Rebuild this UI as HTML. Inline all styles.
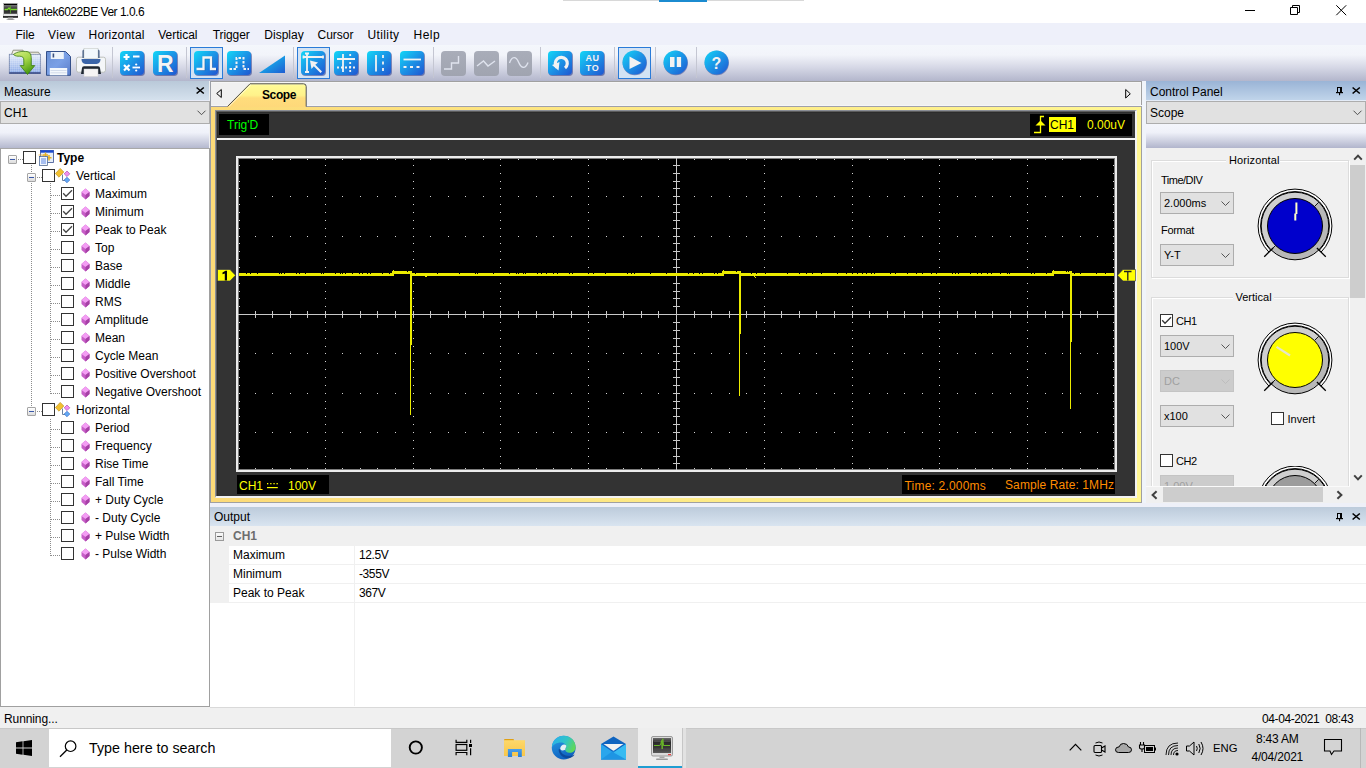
<!DOCTYPE html>
<html><head><meta charset="utf-8">
<style>
*{margin:0;padding:0;box-sizing:border-box}
html,body{width:1366px;height:768px;overflow:hidden;background:#f0f0f0;font-family:"Liberation Sans",sans-serif;font-size:12px;color:#000}
.a{position:absolute}
.t{position:absolute;white-space:pre;line-height:1;font-family:"Liberation Sans",sans-serif}
svg{position:absolute;overflow:visible}
</style></head><body>
<div class="a" style="left:0px;top:0px;width:1366px;height:23px;background:#fff;"></div><div class="a" style="left:563px;top:0px;width:241px;height:1px;background:#d8d8d8;"></div><div class="a" style="left:659px;top:0px;width:48px;height:2px;background:#1b8bd0;"></div><svg style="left:3px;top:3px" width="15" height="17" viewBox="0 0 15 17">
<defs><linearGradient id="gapp" x1="0" y1="0" x2="0" y2="1"><stop offset="0" stop-color="#7a7a7a"/><stop offset="0.5" stop-color="#2a2a2a"/><stop offset="1" stop-color="#3a3a3a"/></linearGradient></defs>
<rect x="0.3" y="0.3" width="14.4" height="14" fill="#e4e4e4" stroke="#9a9a9a" stroke-width="0.5"/>
<rect x="1" y="0.8" width="13" height="1.2" fill="#000"/>
<rect x="1" y="2" width="13" height="8.8" fill="url(#gapp)"/>
<path d="M1.5 6.5 H4.5 L6 5 L7.2 6.5 H14" stroke="#7ad82a" stroke-width="1.3" fill="none"/>
<path d="M7.5 2.5 V10.5" stroke="#5aa82a" stroke-width="1" opacity="0.8"/>
<rect x="0" y="13.2" width="15" height="1.4" fill="#000"/>
<rect x="5" y="14.6" width="5" height="1.2" fill="#bdbdbd"/>
<ellipse cx="7.5" cy="16.2" rx="4.2" ry="0.8" fill="#9a9a9a"/>
</svg><div class="t" style="left:23px;top:6.3px;font-size:12px;color:#000;font-weight:400;letter-spacing:-0.5px">Hantek6022BE Ver 1.0.6</div><div class="a" style="left:1245px;top:10px;width:10px;height:1px;background:#000;"></div><svg style="left:1290px;top:5px" width="11" height="11" viewBox="0 0 11 11">
<path d="M0.5 2.5 H7.5 V9.5 H0.5 Z" fill="none" stroke="#000" stroke-width="1"/>
<path d="M2.5 2.5 V0.5 H9.5 V7.5 H7.5" fill="none" stroke="#000" stroke-width="1"/></svg><svg style="left:1336px;top:5px" width="11" height="11" viewBox="0 0 11 11">
<path d="M0.3 0.3 L10.2 10.2 M10.2 0.3 L0.3 10.2" stroke="#000" stroke-width="1"/></svg>
<div class="a" style="left:0px;top:23px;width:1366px;height:22px;background:#eef0fa;"></div><div class="t" style="left:15.399999999999999px;top:28.5px;font-size:12px;color:#000;font-weight:400;letter-spacing:0px">File</div><div class="t" style="left:48px;top:28.5px;font-size:12px;color:#000;font-weight:400;letter-spacing:0.4px">View</div><div class="t" style="left:88.6px;top:28.5px;font-size:12px;color:#000;font-weight:400;letter-spacing:0.2px">Horizontal</div><div class="t" style="left:158.2px;top:28.5px;font-size:12px;color:#000;font-weight:400;letter-spacing:0px">Vertical</div><div class="t" style="left:212.8px;top:28.5px;font-size:12px;color:#000;font-weight:400;letter-spacing:-0.1px">Trigger</div><div class="t" style="left:264.3px;top:28.5px;font-size:12px;color:#000;font-weight:400;letter-spacing:0px">Display</div><div class="t" style="left:317.5px;top:28.5px;font-size:12px;color:#000;font-weight:400;letter-spacing:0px">Cursor</div><div class="t" style="left:367.4px;top:28.5px;font-size:12px;color:#000;font-weight:400;letter-spacing:0.4px">Utility</div><div class="t" style="left:413.5px;top:28.5px;font-size:12px;color:#000;font-weight:400;letter-spacing:0.5px">Help</div>
<div class="a" style="left:0;top:45px;width:1366px;height:36px;background:linear-gradient(#f4f7fc 0%,#f2f4fa 28%,#d6d8e6 62%,#b3b6cc 100%)"></div>
<svg width="0" height="0" style="position:absolute"><defs>
<linearGradient id="gb" x1="0" y1="0" x2="1" y2="1"><stop offset="0" stop-color="#12d8f7"/><stop offset="0.45" stop-color="#1a9ae8"/><stop offset="1" stop-color="#2055d0"/></linearGradient>
<linearGradient id="gg" x1="0" y1="0" x2="0" y2="1"><stop offset="0" stop-color="#a9adb9"/><stop offset="1" stop-color="#a0a4b0"/></linearGradient>
<linearGradient id="gf" x1="0" y1="0" x2="0" y2="1"><stop offset="0" stop-color="#d6e2f6"/><stop offset="1" stop-color="#7fa3dc"/></linearGradient>
<linearGradient id="garr" x1="0" y1="0" x2="0.6" y2="1"><stop offset="0" stop-color="#d8f08a"/><stop offset="0.5" stop-color="#a6d84a"/><stop offset="1" stop-color="#4a9a10"/></linearGradient>
</defs></svg><svg style="left:6px;top:46px" width="38" height="32" viewBox="0 0 38 32">
<defs><linearGradient id="gfold" x1="0" y1="0" x2="0" y2="1"><stop offset="0" stop-color="#e4ecfa"/><stop offset="1" stop-color="#88a8e6"/></linearGradient>
<pattern id="pgrid" width="2" height="2" patternUnits="userSpaceOnUse"><rect width="2" height="2" fill="none"/><rect width="2" height="0.4" fill="#ffffff" opacity="0.35"/><rect width="0.4" height="2" fill="#ffffff" opacity="0.35"/></pattern></defs>
<path d="M5.5 8.5 L7.2 4.2 H17 L18.2 6.2 H32.5 L33.8 8.5 Z" fill="#f2f0e2" stroke="#7a7a68" stroke-width="0.8"/>
<rect x="3.3" y="8.3" width="31.3" height="19.2" fill="url(#gfold)" stroke="#7080a8" stroke-width="0.8"/>
<rect x="3.3" y="8.3" width="31.3" height="19.2" fill="url(#pgrid)"/>
<rect x="3.3" y="26.3" width="31.3" height="1.3" fill="#2a3a78"/>
<path d="M7.5 8.5 C11 5.5 17 5 21 5.6 C24.5 6.2 25.3 9 25.3 13 V19.6 H28.8 L21.5 28.5 L14.2 19.6 H17.8 V14 C17.8 11.5 16.5 10.2 13.5 10.2 C11.5 10.2 9.2 10.3 7.5 8.5 Z" fill="url(#garr)" stroke="#3a7a10" stroke-width="0.8"/>
</svg><svg style="left:46px;top:51px" width="25" height="25" viewBox="0 0 25 25">
<defs><linearGradient id="gflop" x1="0" y1="0" x2="1" y2="1"><stop offset="0" stop-color="#6a90d4"/><stop offset="0.5" stop-color="#7aa0e6"/><stop offset="1" stop-color="#5a7cc8"/></linearGradient></defs>
<path d="M0.5 0.5 H19.5 L24.5 5.5 V24.3 H0.5 Z" fill="url(#gflop)" stroke="#34508a" stroke-width="1"/>
<rect x="4.8" y="1" width="13" height="7" fill="#eef4fb"/><rect x="6.6" y="2.5" width="1.6" height="4" fill="#3a5080"/>
<rect x="3.8" y="17" width="17.4" height="7.3" fill="#f4f8fc"/><path d="M4.5 19.5H20.5M4.5 21.8H20.5" stroke="#c4d0e4" stroke-width="0.7"/>
</svg><svg style="left:76px;top:48px" width="30" height="29" viewBox="0 0 30 29">
<rect x="0.5" y="9.2" width="29" height="15" rx="2" fill="#f4f6f8" stroke="#b4b8b0" stroke-width="0.8"/>
<path d="M6.5 3 Q6.5 1.5 8 1.5 H22 Q23.5 1.5 23.5 3 V10 H6.5 Z" fill="#34507a"/>
<rect x="8" y="0.5" width="14" height="10" fill="#f2f8fc" stroke="#c8ccc8" stroke-width="0.6"/>
<path d="M5.5 11 H24.5 Q24.5 15.5 20.5 16 H9.5 Q5.5 15.5 5.5 11 Z" fill="#3a64a8"/>
<path d="M6 20 Q6 18.3 8 18.3 H22 Q24 18.3 24 20 L25 26 H5 Z" fill="#1e2630"/>
<rect x="8" y="21" width="14" height="7.5" fill="#f6f4f4" stroke="#cfcfcf" stroke-width="0.5"/>
</svg><div class="a" style="left:112px;top:47px;width:1px;height:31px;background:#c4c6d2;"></div><svg style="left:120px;top:51px" width="25" height="25" viewBox="0 0 25 25">
<rect x="0.5" y="1" width="24.5" height="24" rx="4" fill="#2a3a8a" opacity="0.55"/>
<rect x="0" y="0" width="24" height="24" rx="4" fill="url(#gb)"/><path d="M3.5 6 H9.5 M6.5 3 V9 M13 5.5 H19.5" stroke="#fff" stroke-width="2.2"/>
<path d="M4 14 L9.5 19.5 M9.5 14 L4 19.5" stroke="#fff" stroke-width="2.2"/>
<path d="M12.5 16.5 H20" stroke="#fff" stroke-width="1.8"/><circle cx="16.2" cy="13.5" r="1.1" fill="#fff"/><circle cx="16.2" cy="19.5" r="1.1" fill="#fff"/></svg><svg style="left:153px;top:51px" width="25" height="25" viewBox="0 0 25 25">
<rect x="0.5" y="1" width="24.5" height="24" rx="4" fill="#2a3a8a" opacity="0.55"/>
<rect x="0" y="0" width="24" height="24" rx="4" fill="url(#gb)"/><text x="13" y="21.3" text-anchor="middle" font-family="Liberation Sans" font-weight="700" font-size="23" fill="#1a3070" opacity="0.45">R</text><text x="12.3" y="20.6" text-anchor="middle" font-family="Liberation Sans" font-weight="700" font-size="23" fill="#f4f4f4">R</text></svg><div class="a" style="left:186px;top:47px;width:1px;height:31px;background:#c4c6d2;"></div><div class="a" style="left:190px;top:47px;width:33px;height:32px;background:#d3e3f4;border:1px solid #2a7bd8"></div><svg style="left:194px;top:51px" width="25" height="25" viewBox="0 0 25 25">
<rect x="0.5" y="1" width="24.5" height="24" rx="4" fill="#2a3a8a" opacity="0.55"/>
<rect x="0" y="0" width="24" height="24" rx="4" fill="url(#gb)"/><path d="M3.2 18.7 H10.2 V7.2 H17.7 V18.7 H22.7" stroke="#1a3070" stroke-width="2.2" fill="none" opacity="0.4"/><path d="M2.5 18 H9.5 V6.5 H17 V18 H22" stroke="#f4f4f4" stroke-width="2.3" fill="none"/></svg><svg style="left:227px;top:51px" width="25" height="25" viewBox="0 0 25 25">
<rect x="0.5" y="1" width="24.5" height="24" rx="4" fill="#2a3a8a" opacity="0.55"/>
<rect x="0" y="0" width="24" height="24" rx="4" fill="url(#gb)"/><path d="M2.5 18 H9.5 V7 H16.5 V18 H22" stroke="#f2f2f2" stroke-width="2" fill="none" stroke-dasharray="2.5 1.5"/></svg><svg style="left:259px;top:55px" width="27" height="19" viewBox="0 0 27 19">
<defs><linearGradient id="gtri" x1="0" y1="0" x2="1" y2="1"><stop offset="0" stop-color="#10d4f6"/><stop offset="1" stop-color="#1f5cd2"/></linearGradient></defs>
<path d="M0 18 L26 0.5 V18 Z" fill="url(#gtri)"/></svg><div class="a" style="left:293px;top:47px;width:1px;height:31px;background:#c4c6d2;"></div><div class="a" style="left:297px;top:47px;width:33px;height:32px;background:#d3e3f4;border:1px solid #2a7bd8"></div><svg style="left:301px;top:51px" width="25" height="25" viewBox="0 0 25 25">
<rect x="0.5" y="1" width="24.5" height="24" rx="4" fill="#2a3a8a" opacity="0.55"/>
<rect x="0" y="0" width="24" height="24" rx="4" fill="url(#gb)"/><path d="M6 2.5 V21 M4 2.5 H8 M4 21 H8 M2.5 6 H22 M2.5 4.5 V7.5 M22 4.5 V7.5" stroke="#f2f2f2" stroke-width="1.8"/>
<path d="M9 9.5 L17 11.5 L14.3 13.8 L21 20.5 L19.5 22 L12.8 15.3 L10.5 18 Z" fill="#f2f2f2"/></svg><svg style="left:334px;top:51px" width="25" height="25" viewBox="0 0 25 25">
<rect x="0.5" y="1" width="24.5" height="24" rx="4" fill="#2a3a8a" opacity="0.55"/>
<rect x="0" y="0" width="24" height="24" rx="4" fill="url(#gb)"/><path d="M3 8 H21 M9 3 V21" stroke="#f2f2f2" stroke-width="1.8"/>
<path d="M3 16.5 H21 M16.2 3 V21" stroke="#f2f2f2" stroke-width="1.8" stroke-dasharray="2 2"/></svg><svg style="left:367px;top:51px" width="25" height="25" viewBox="0 0 25 25">
<rect x="0.5" y="1" width="24.5" height="24" rx="4" fill="#2a3a8a" opacity="0.55"/>
<rect x="0" y="0" width="24" height="24" rx="4" fill="url(#gb)"/><path d="M9 4 V20.5" stroke="#f2f2f2" stroke-width="1.8"/>
<path d="M16 4 V20.5" stroke="#f2f2f2" stroke-width="1.8" stroke-dasharray="3 3.5"/></svg><svg style="left:400px;top:51px" width="25" height="25" viewBox="0 0 25 25">
<rect x="0.5" y="1" width="24.5" height="24" rx="4" fill="#2a3a8a" opacity="0.55"/>
<rect x="0" y="0" width="24" height="24" rx="4" fill="url(#gb)"/><path d="M3.5 8.5 H21" stroke="#f2f2f2" stroke-width="1.8"/>
<path d="M3.5 16 H21" stroke="#f2f2f2" stroke-width="1.8" stroke-dasharray="3 3.5"/></svg><div class="a" style="left:433px;top:47px;width:1px;height:31px;background:#c4c6d2;"></div><svg style="left:441px;top:51px" width="25" height="25" viewBox="0 0 25 25">
<rect x="0" y="0" width="25" height="25" rx="4" fill="url(#gg)"/><path d="M3 18 H10.5 V12 H17.5 V5" stroke="#dfe3ee" stroke-width="1.4" fill="none"/></svg><svg style="left:474px;top:51px" width="25" height="25" viewBox="0 0 25 25">
<rect x="0" y="0" width="25" height="25" rx="4" fill="url(#gg)"/><path d="M3 15 L9.5 10 L14 15 L21 10" stroke="#dfe3ee" stroke-width="1.4" fill="none"/></svg><svg style="left:507px;top:51px" width="25" height="25" viewBox="0 0 25 25">
<rect x="0" y="0" width="25" height="25" rx="4" fill="url(#gg)"/><path d="M2.5 12 C5 5 9 5 11.5 11 C14 17 18 19 21 11.5" stroke="#dfe3ee" stroke-width="1.4" fill="none"/></svg><div class="a" style="left:540px;top:47px;width:1px;height:31px;background:#c4c6d2;"></div><svg style="left:548px;top:51px" width="25" height="25" viewBox="0 0 25 25">
<rect x="0.5" y="1" width="24.5" height="24" rx="4" fill="#2a3a8a" opacity="0.55"/>
<rect x="0" y="0" width="24" height="24" rx="4" fill="url(#gb)"/><path d="M9 16.5 A6 6 0 1 1 17 17" stroke="#f2f2f2" stroke-width="3.2" fill="none"/>
<path d="M4 14 L11.5 11 L10.5 19.5 Z" fill="#f2f2f2"/></svg><svg style="left:580px;top:51px" width="25" height="25" viewBox="0 0 25 25">
<rect x="0.5" y="1" width="24.5" height="24" rx="4" fill="#2a3a8a" opacity="0.55"/>
<rect x="0" y="0" width="24" height="24" rx="4" fill="url(#gb)"/><text x="12.5" y="10" text-anchor="middle" font-family="Liberation Sans" font-weight="700" font-size="9" fill="#f2f2f2" letter-spacing="0.5">AU</text>
<text x="12.5" y="20" text-anchor="middle" font-family="Liberation Sans" font-weight="700" font-size="9" fill="#f2f2f2" letter-spacing="0.5">TO</text></svg><div class="a" style="left:614px;top:47px;width:1px;height:31px;background:#c4c6d2;"></div><div class="a" style="left:618px;top:47px;width:33px;height:32px;background:#d3e3f4;border:1px solid #2a7bd8"></div><svg style="left:622px;top:50px" width="25" height="25" viewBox="0 0 25 25">
<circle cx="12.8" cy="13.0" r="12.2" fill="#2a3a8a" opacity="0.5"/>
<circle cx="12.5" cy="12.5" r="12.0" fill="url(#gb)"/><path d="M7.5 6.5 L19.5 13 L7.5 19 Z" fill="#f2f2f2"/></svg><div class="a" style="left:655px;top:47px;width:1px;height:31px;background:#c4c6d2;"></div><svg style="left:663px;top:50px" width="25" height="25" viewBox="0 0 25 25">
<circle cx="12.8" cy="13.0" r="12.2" fill="#2a3a8a" opacity="0.5"/>
<circle cx="12.5" cy="12.5" r="12.0" fill="url(#gb)"/><rect x="7" y="7" width="4.5" height="10" fill="#f2f2f2"/><rect x="13.8" y="7" width="4.3" height="10" fill="#f2f2f2"/></svg><div class="a" style="left:696px;top:47px;width:1px;height:31px;background:#c4c6d2;"></div><svg style="left:704px;top:50px" width="25" height="25" viewBox="0 0 25 25">
<circle cx="12.8" cy="13.0" r="12.2" fill="#2a3a8a" opacity="0.5"/>
<circle cx="12.5" cy="12.5" r="12.0" fill="url(#gb)"/><text x="12.5" y="19" text-anchor="middle" font-family="Liberation Sans" font-weight="700" font-size="16" fill="#f2f2f2">?</text></svg>
<div class="a" style="left:0px;top:81px;width:209px;height:19px;background:linear-gradient(#b9c9d9,#d5e1ed);"></div><div class="a" style="left:0px;top:100px;width:209px;height:1px;background:#e8ecf8;"></div><div class="t" style="left:4px;top:85.5px;font-size:12px;color:#000;font-weight:400;">Measure</div><svg style="left:196px;top:87px" width="9" height="7" viewBox="0 0 9 7"><path d="M0.6 0.5 L7.8 6.5 M7.8 0.5 L0.6 6.5" stroke="#000" stroke-width="1.6"/></svg><div class="a" style="left:0px;top:101px;width:210px;height:23px;background:#e1e1e1;border:1px solid #adadad"></div><div class="t" style="left:4px;top:107px;font-size:12px;color:#000;font-weight:400;">CH1</div><svg style="left:197px;top:110px" width="9" height="6" viewBox="0 0 9 6"><path d="M0.5 0.7 L4.5 4.7 L8.5 0.7" stroke="#505050" stroke-width="1" fill="none"/></svg><div class="a" style="left:0px;top:124px;width:209px;height:25px;background:linear-gradient(#f4f6fc 0%,#eff1f9 35%,#b1b5cc 100%);"></div><div class="a" style="left:0px;top:148px;width:210px;height:559px;background:#fff;border-left:1px solid #a0a0a0;border-right:1px solid #a0a0a0;border-bottom:1px solid #a0a0a0;border-top:1px solid #a8a8a8"></div><div class="a" style="left:8px;top:155px;width:9px;height:9px;border:1px solid #a4a4a4;border-radius:1px;background:linear-gradient(#fff,#dcdcdc)"></div><div class="a" style="left:10px;top:159px;width:5px;height:1px;background:#3a58a8;"></div><div class="a" style="left:18px;top:159px;width:5px;height:1px;background:repeating-linear-gradient(to right,#8c8c8c 0 1px,transparent 1px 2px)"></div><div class="a" style="left:23px;top:151px;width:13px;height:13px;border:1px solid #333;background:#fff"></div><svg style="left:38px;top:150px" width="16" height="16" viewBox="0 0 16 16">
<rect x="2.5" y="0.5" width="13" height="12" fill="#e6eef8" stroke="#3a5090" stroke-width="0.8"/>
<rect x="2.5" y="0.3" width="13" height="2.4" fill="#1a4ad0"/>
<path d="M7.5 2.5 V7.5 M5 5 H10 M11 5 V10.5 M8.5 7.8 H13.5" stroke="#e8b020" stroke-width="1.5"/>
<path d="M0.5 5 H5 V15.3 H9.5" stroke="#f0b030" fill="none" stroke-width="0.8"/>
<rect x="1.5" y="6.5" width="8" height="9" fill="#f2f6fc" stroke="#3a5a90" stroke-width="0.7"/>
<path d="M3 9 H8 M3 11 H8 M3 13 H8" stroke="#4a7ae0" stroke-width="0.9"/></svg><div class="t" style="left:57px;top:152px;font-size:12px;color:#000;font-weight:700;">Type</div><div class="a" style="left:31px;top:165px;width:1px;height:246px;background:repeating-linear-gradient(to bottom,#8c8c8c 0 1px,transparent 1px 2px)"></div><div class="a" style="left:27px;top:173px;width:9px;height:9px;border:1px solid #a4a4a4;border-radius:1px;background:linear-gradient(#fff,#dcdcdc)"></div><div class="a" style="left:29px;top:177px;width:5px;height:1px;background:#3a58a8;"></div><div class="a" style="left:37px;top:177px;width:5px;height:1px;background:repeating-linear-gradient(to right,#8c8c8c 0 1px,transparent 1px 2px)"></div><div class="a" style="left:42px;top:169px;width:13px;height:13px;border:1px solid #333;background:#fff"></div><svg style="left:55px;top:168px" width="16" height="16" viewBox="0 0 16 16">
<path d="M7.5 6.5 V12.5 H10" stroke="#6a80a0" fill="none" stroke-width="1"/>
<path d="M0.4 5.6 L5.2 0.4 L8.8 4 L4 9.2 Z" fill="#f2c030" stroke="#b88a10" stroke-width="0.6"/>
<path d="M9.2 5.8 L12 3 L14.8 5.8 L12 8.6 Z" fill="#f08ef0" stroke="#a040a0" stroke-width="0.6"/>
<path d="M9.2 12 L12 9.2 L14.8 12 L12 14.8 Z" fill="#62a8f4" stroke="#2a60c0" stroke-width="0.6"/></svg><div class="t" style="left:76px;top:170px;font-size:12px;color:#000;font-weight:400;">Vertical</div><div class="a" style="left:50px;top:183px;width:1px;height:211px;background:repeating-linear-gradient(to bottom,#8c8c8c 0 1px,transparent 1px 2px)"></div><div class="a" style="left:51px;top:195px;width:10px;height:1px;background:repeating-linear-gradient(to right,#8c8c8c 0 1px,transparent 1px 2px)"></div><div class="a" style="left:61px;top:187px;width:13px;height:13px;border:1px solid #333;background:#fff"></div><svg style="left:61px;top:187px" width="13" height="13" viewBox="0 0 13 13"><path d="M2.2 6.3 L5 9.2 L11 3.2" stroke="#444" stroke-width="1.3" fill="none"/></svg><svg style="left:81px;top:187.5px" width="9" height="12" viewBox="0 0 9 12">
<path d="M4.5 0.5 L8.5 4 L8.5 8 L4.5 11.5 L0.5 8 L0.5 4 Z" fill="#c85ec8"/>
<path d="M4.5 0.5 L8.5 4 L4.5 7 L0.5 4 Z" fill="#f39ef3"/>
<path d="M4.5 7 L8.5 4 L8.5 8 L4.5 11.5 Z" fill="#a640a6"/></svg><div class="t" style="left:95px;top:188px;font-size:12px;color:#000;font-weight:400;">Maximum</div><div class="a" style="left:51px;top:213px;width:10px;height:1px;background:repeating-linear-gradient(to right,#8c8c8c 0 1px,transparent 1px 2px)"></div><div class="a" style="left:61px;top:205px;width:13px;height:13px;border:1px solid #333;background:#fff"></div><svg style="left:61px;top:205px" width="13" height="13" viewBox="0 0 13 13"><path d="M2.2 6.3 L5 9.2 L11 3.2" stroke="#444" stroke-width="1.3" fill="none"/></svg><svg style="left:81px;top:205.5px" width="9" height="12" viewBox="0 0 9 12">
<path d="M4.5 0.5 L8.5 4 L8.5 8 L4.5 11.5 L0.5 8 L0.5 4 Z" fill="#c85ec8"/>
<path d="M4.5 0.5 L8.5 4 L4.5 7 L0.5 4 Z" fill="#f39ef3"/>
<path d="M4.5 7 L8.5 4 L8.5 8 L4.5 11.5 Z" fill="#a640a6"/></svg><div class="t" style="left:95px;top:206px;font-size:12px;color:#000;font-weight:400;">Minimum</div><div class="a" style="left:51px;top:231px;width:10px;height:1px;background:repeating-linear-gradient(to right,#8c8c8c 0 1px,transparent 1px 2px)"></div><div class="a" style="left:61px;top:223px;width:13px;height:13px;border:1px solid #333;background:#fff"></div><svg style="left:61px;top:223px" width="13" height="13" viewBox="0 0 13 13"><path d="M2.2 6.3 L5 9.2 L11 3.2" stroke="#444" stroke-width="1.3" fill="none"/></svg><svg style="left:81px;top:223.5px" width="9" height="12" viewBox="0 0 9 12">
<path d="M4.5 0.5 L8.5 4 L8.5 8 L4.5 11.5 L0.5 8 L0.5 4 Z" fill="#c85ec8"/>
<path d="M4.5 0.5 L8.5 4 L4.5 7 L0.5 4 Z" fill="#f39ef3"/>
<path d="M4.5 7 L8.5 4 L8.5 8 L4.5 11.5 Z" fill="#a640a6"/></svg><div class="t" style="left:95px;top:224px;font-size:12px;color:#000;font-weight:400;">Peak to Peak</div><div class="a" style="left:51px;top:249px;width:10px;height:1px;background:repeating-linear-gradient(to right,#8c8c8c 0 1px,transparent 1px 2px)"></div><div class="a" style="left:61px;top:241px;width:13px;height:13px;border:1px solid #333;background:#fff"></div><svg style="left:81px;top:241.5px" width="9" height="12" viewBox="0 0 9 12">
<path d="M4.5 0.5 L8.5 4 L8.5 8 L4.5 11.5 L0.5 8 L0.5 4 Z" fill="#c85ec8"/>
<path d="M4.5 0.5 L8.5 4 L4.5 7 L0.5 4 Z" fill="#f39ef3"/>
<path d="M4.5 7 L8.5 4 L8.5 8 L4.5 11.5 Z" fill="#a640a6"/></svg><div class="t" style="left:95px;top:242px;font-size:12px;color:#000;font-weight:400;">Top</div><div class="a" style="left:51px;top:267px;width:10px;height:1px;background:repeating-linear-gradient(to right,#8c8c8c 0 1px,transparent 1px 2px)"></div><div class="a" style="left:61px;top:259px;width:13px;height:13px;border:1px solid #333;background:#fff"></div><svg style="left:81px;top:259.5px" width="9" height="12" viewBox="0 0 9 12">
<path d="M4.5 0.5 L8.5 4 L8.5 8 L4.5 11.5 L0.5 8 L0.5 4 Z" fill="#c85ec8"/>
<path d="M4.5 0.5 L8.5 4 L4.5 7 L0.5 4 Z" fill="#f39ef3"/>
<path d="M4.5 7 L8.5 4 L8.5 8 L4.5 11.5 Z" fill="#a640a6"/></svg><div class="t" style="left:95px;top:260px;font-size:12px;color:#000;font-weight:400;">Base</div><div class="a" style="left:51px;top:285px;width:10px;height:1px;background:repeating-linear-gradient(to right,#8c8c8c 0 1px,transparent 1px 2px)"></div><div class="a" style="left:61px;top:277px;width:13px;height:13px;border:1px solid #333;background:#fff"></div><svg style="left:81px;top:277.5px" width="9" height="12" viewBox="0 0 9 12">
<path d="M4.5 0.5 L8.5 4 L8.5 8 L4.5 11.5 L0.5 8 L0.5 4 Z" fill="#c85ec8"/>
<path d="M4.5 0.5 L8.5 4 L4.5 7 L0.5 4 Z" fill="#f39ef3"/>
<path d="M4.5 7 L8.5 4 L8.5 8 L4.5 11.5 Z" fill="#a640a6"/></svg><div class="t" style="left:95px;top:278px;font-size:12px;color:#000;font-weight:400;">Middle</div><div class="a" style="left:51px;top:303px;width:10px;height:1px;background:repeating-linear-gradient(to right,#8c8c8c 0 1px,transparent 1px 2px)"></div><div class="a" style="left:61px;top:295px;width:13px;height:13px;border:1px solid #333;background:#fff"></div><svg style="left:81px;top:295.5px" width="9" height="12" viewBox="0 0 9 12">
<path d="M4.5 0.5 L8.5 4 L8.5 8 L4.5 11.5 L0.5 8 L0.5 4 Z" fill="#c85ec8"/>
<path d="M4.5 0.5 L8.5 4 L4.5 7 L0.5 4 Z" fill="#f39ef3"/>
<path d="M4.5 7 L8.5 4 L8.5 8 L4.5 11.5 Z" fill="#a640a6"/></svg><div class="t" style="left:95px;top:296px;font-size:12px;color:#000;font-weight:400;">RMS</div><div class="a" style="left:51px;top:321px;width:10px;height:1px;background:repeating-linear-gradient(to right,#8c8c8c 0 1px,transparent 1px 2px)"></div><div class="a" style="left:61px;top:313px;width:13px;height:13px;border:1px solid #333;background:#fff"></div><svg style="left:81px;top:313.5px" width="9" height="12" viewBox="0 0 9 12">
<path d="M4.5 0.5 L8.5 4 L8.5 8 L4.5 11.5 L0.5 8 L0.5 4 Z" fill="#c85ec8"/>
<path d="M4.5 0.5 L8.5 4 L4.5 7 L0.5 4 Z" fill="#f39ef3"/>
<path d="M4.5 7 L8.5 4 L8.5 8 L4.5 11.5 Z" fill="#a640a6"/></svg><div class="t" style="left:95px;top:314px;font-size:12px;color:#000;font-weight:400;">Amplitude</div><div class="a" style="left:51px;top:339px;width:10px;height:1px;background:repeating-linear-gradient(to right,#8c8c8c 0 1px,transparent 1px 2px)"></div><div class="a" style="left:61px;top:331px;width:13px;height:13px;border:1px solid #333;background:#fff"></div><svg style="left:81px;top:331.5px" width="9" height="12" viewBox="0 0 9 12">
<path d="M4.5 0.5 L8.5 4 L8.5 8 L4.5 11.5 L0.5 8 L0.5 4 Z" fill="#c85ec8"/>
<path d="M4.5 0.5 L8.5 4 L4.5 7 L0.5 4 Z" fill="#f39ef3"/>
<path d="M4.5 7 L8.5 4 L8.5 8 L4.5 11.5 Z" fill="#a640a6"/></svg><div class="t" style="left:95px;top:332px;font-size:12px;color:#000;font-weight:400;">Mean</div><div class="a" style="left:51px;top:357px;width:10px;height:1px;background:repeating-linear-gradient(to right,#8c8c8c 0 1px,transparent 1px 2px)"></div><div class="a" style="left:61px;top:349px;width:13px;height:13px;border:1px solid #333;background:#fff"></div><svg style="left:81px;top:349.5px" width="9" height="12" viewBox="0 0 9 12">
<path d="M4.5 0.5 L8.5 4 L8.5 8 L4.5 11.5 L0.5 8 L0.5 4 Z" fill="#c85ec8"/>
<path d="M4.5 0.5 L8.5 4 L4.5 7 L0.5 4 Z" fill="#f39ef3"/>
<path d="M4.5 7 L8.5 4 L8.5 8 L4.5 11.5 Z" fill="#a640a6"/></svg><div class="t" style="left:95px;top:350px;font-size:12px;color:#000;font-weight:400;">Cycle Mean</div><div class="a" style="left:51px;top:375px;width:10px;height:1px;background:repeating-linear-gradient(to right,#8c8c8c 0 1px,transparent 1px 2px)"></div><div class="a" style="left:61px;top:367px;width:13px;height:13px;border:1px solid #333;background:#fff"></div><svg style="left:81px;top:367.5px" width="9" height="12" viewBox="0 0 9 12">
<path d="M4.5 0.5 L8.5 4 L8.5 8 L4.5 11.5 L0.5 8 L0.5 4 Z" fill="#c85ec8"/>
<path d="M4.5 0.5 L8.5 4 L4.5 7 L0.5 4 Z" fill="#f39ef3"/>
<path d="M4.5 7 L8.5 4 L8.5 8 L4.5 11.5 Z" fill="#a640a6"/></svg><div class="t" style="left:95px;top:368px;font-size:12px;color:#000;font-weight:400;">Positive Overshoot</div><div class="a" style="left:51px;top:393px;width:10px;height:1px;background:repeating-linear-gradient(to right,#8c8c8c 0 1px,transparent 1px 2px)"></div><div class="a" style="left:61px;top:385px;width:13px;height:13px;border:1px solid #333;background:#fff"></div><svg style="left:81px;top:385.5px" width="9" height="12" viewBox="0 0 9 12">
<path d="M4.5 0.5 L8.5 4 L8.5 8 L4.5 11.5 L0.5 8 L0.5 4 Z" fill="#c85ec8"/>
<path d="M4.5 0.5 L8.5 4 L4.5 7 L0.5 4 Z" fill="#f39ef3"/>
<path d="M4.5 7 L8.5 4 L8.5 8 L4.5 11.5 Z" fill="#a640a6"/></svg><div class="t" style="left:95px;top:386px;font-size:12px;color:#000;font-weight:400;">Negative Overshoot</div><div class="a" style="left:27px;top:407px;width:9px;height:9px;border:1px solid #a4a4a4;border-radius:1px;background:linear-gradient(#fff,#dcdcdc)"></div><div class="a" style="left:29px;top:411px;width:5px;height:1px;background:#3a58a8;"></div><div class="a" style="left:37px;top:411px;width:5px;height:1px;background:repeating-linear-gradient(to right,#8c8c8c 0 1px,transparent 1px 2px)"></div><div class="a" style="left:42px;top:403px;width:13px;height:13px;border:1px solid #333;background:#fff"></div><svg style="left:55px;top:402px" width="16" height="16" viewBox="0 0 16 16">
<path d="M7.5 6.5 V12.5 H10" stroke="#6a80a0" fill="none" stroke-width="1"/>
<path d="M0.4 5.6 L5.2 0.4 L8.8 4 L4 9.2 Z" fill="#f2c030" stroke="#b88a10" stroke-width="0.6"/>
<path d="M9.2 5.8 L12 3 L14.8 5.8 L12 8.6 Z" fill="#f08ef0" stroke="#a040a0" stroke-width="0.6"/>
<path d="M9.2 12 L12 9.2 L14.8 12 L12 14.8 Z" fill="#62a8f4" stroke="#2a60c0" stroke-width="0.6"/></svg><div class="t" style="left:76px;top:404px;font-size:12px;color:#000;font-weight:400;">Horizontal</div><div class="a" style="left:50px;top:419px;width:1px;height:137px;background:repeating-linear-gradient(to bottom,#8c8c8c 0 1px,transparent 1px 2px)"></div><div class="a" style="left:51px;top:429px;width:10px;height:1px;background:repeating-linear-gradient(to right,#8c8c8c 0 1px,transparent 1px 2px)"></div><div class="a" style="left:61px;top:421px;width:13px;height:13px;border:1px solid #333;background:#fff"></div><svg style="left:81px;top:421.5px" width="9" height="12" viewBox="0 0 9 12">
<path d="M4.5 0.5 L8.5 4 L8.5 8 L4.5 11.5 L0.5 8 L0.5 4 Z" fill="#c85ec8"/>
<path d="M4.5 0.5 L8.5 4 L4.5 7 L0.5 4 Z" fill="#f39ef3"/>
<path d="M4.5 7 L8.5 4 L8.5 8 L4.5 11.5 Z" fill="#a640a6"/></svg><div class="t" style="left:95px;top:422px;font-size:12px;color:#000;font-weight:400;">Period</div><div class="a" style="left:51px;top:447px;width:10px;height:1px;background:repeating-linear-gradient(to right,#8c8c8c 0 1px,transparent 1px 2px)"></div><div class="a" style="left:61px;top:439px;width:13px;height:13px;border:1px solid #333;background:#fff"></div><svg style="left:81px;top:439.5px" width="9" height="12" viewBox="0 0 9 12">
<path d="M4.5 0.5 L8.5 4 L8.5 8 L4.5 11.5 L0.5 8 L0.5 4 Z" fill="#c85ec8"/>
<path d="M4.5 0.5 L8.5 4 L4.5 7 L0.5 4 Z" fill="#f39ef3"/>
<path d="M4.5 7 L8.5 4 L8.5 8 L4.5 11.5 Z" fill="#a640a6"/></svg><div class="t" style="left:95px;top:440px;font-size:12px;color:#000;font-weight:400;">Frequency</div><div class="a" style="left:51px;top:465px;width:10px;height:1px;background:repeating-linear-gradient(to right,#8c8c8c 0 1px,transparent 1px 2px)"></div><div class="a" style="left:61px;top:457px;width:13px;height:13px;border:1px solid #333;background:#fff"></div><svg style="left:81px;top:457.5px" width="9" height="12" viewBox="0 0 9 12">
<path d="M4.5 0.5 L8.5 4 L8.5 8 L4.5 11.5 L0.5 8 L0.5 4 Z" fill="#c85ec8"/>
<path d="M4.5 0.5 L8.5 4 L4.5 7 L0.5 4 Z" fill="#f39ef3"/>
<path d="M4.5 7 L8.5 4 L8.5 8 L4.5 11.5 Z" fill="#a640a6"/></svg><div class="t" style="left:95px;top:458px;font-size:12px;color:#000;font-weight:400;">Rise Time</div><div class="a" style="left:51px;top:483px;width:10px;height:1px;background:repeating-linear-gradient(to right,#8c8c8c 0 1px,transparent 1px 2px)"></div><div class="a" style="left:61px;top:475px;width:13px;height:13px;border:1px solid #333;background:#fff"></div><svg style="left:81px;top:475.5px" width="9" height="12" viewBox="0 0 9 12">
<path d="M4.5 0.5 L8.5 4 L8.5 8 L4.5 11.5 L0.5 8 L0.5 4 Z" fill="#c85ec8"/>
<path d="M4.5 0.5 L8.5 4 L4.5 7 L0.5 4 Z" fill="#f39ef3"/>
<path d="M4.5 7 L8.5 4 L8.5 8 L4.5 11.5 Z" fill="#a640a6"/></svg><div class="t" style="left:95px;top:476px;font-size:12px;color:#000;font-weight:400;">Fall Time</div><div class="a" style="left:51px;top:501px;width:10px;height:1px;background:repeating-linear-gradient(to right,#8c8c8c 0 1px,transparent 1px 2px)"></div><div class="a" style="left:61px;top:493px;width:13px;height:13px;border:1px solid #333;background:#fff"></div><svg style="left:81px;top:493.5px" width="9" height="12" viewBox="0 0 9 12">
<path d="M4.5 0.5 L8.5 4 L8.5 8 L4.5 11.5 L0.5 8 L0.5 4 Z" fill="#c85ec8"/>
<path d="M4.5 0.5 L8.5 4 L4.5 7 L0.5 4 Z" fill="#f39ef3"/>
<path d="M4.5 7 L8.5 4 L8.5 8 L4.5 11.5 Z" fill="#a640a6"/></svg><div class="t" style="left:95px;top:494px;font-size:12px;color:#000;font-weight:400;">+ Duty Cycle</div><div class="a" style="left:51px;top:519px;width:10px;height:1px;background:repeating-linear-gradient(to right,#8c8c8c 0 1px,transparent 1px 2px)"></div><div class="a" style="left:61px;top:511px;width:13px;height:13px;border:1px solid #333;background:#fff"></div><svg style="left:81px;top:511.5px" width="9" height="12" viewBox="0 0 9 12">
<path d="M4.5 0.5 L8.5 4 L8.5 8 L4.5 11.5 L0.5 8 L0.5 4 Z" fill="#c85ec8"/>
<path d="M4.5 0.5 L8.5 4 L4.5 7 L0.5 4 Z" fill="#f39ef3"/>
<path d="M4.5 7 L8.5 4 L8.5 8 L4.5 11.5 Z" fill="#a640a6"/></svg><div class="t" style="left:95px;top:512px;font-size:12px;color:#000;font-weight:400;">- Duty Cycle</div><div class="a" style="left:51px;top:537px;width:10px;height:1px;background:repeating-linear-gradient(to right,#8c8c8c 0 1px,transparent 1px 2px)"></div><div class="a" style="left:61px;top:529px;width:13px;height:13px;border:1px solid #333;background:#fff"></div><svg style="left:81px;top:529.5px" width="9" height="12" viewBox="0 0 9 12">
<path d="M4.5 0.5 L8.5 4 L8.5 8 L4.5 11.5 L0.5 8 L0.5 4 Z" fill="#c85ec8"/>
<path d="M4.5 0.5 L8.5 4 L4.5 7 L0.5 4 Z" fill="#f39ef3"/>
<path d="M4.5 7 L8.5 4 L8.5 8 L4.5 11.5 Z" fill="#a640a6"/></svg><div class="t" style="left:95px;top:530px;font-size:12px;color:#000;font-weight:400;">+ Pulse Width</div><div class="a" style="left:51px;top:555px;width:10px;height:1px;background:repeating-linear-gradient(to right,#8c8c8c 0 1px,transparent 1px 2px)"></div><div class="a" style="left:61px;top:547px;width:13px;height:13px;border:1px solid #333;background:#fff"></div><svg style="left:81px;top:547.5px" width="9" height="12" viewBox="0 0 9 12">
<path d="M4.5 0.5 L8.5 4 L8.5 8 L4.5 11.5 L0.5 8 L0.5 4 Z" fill="#c85ec8"/>
<path d="M4.5 0.5 L8.5 4 L4.5 7 L0.5 4 Z" fill="#f39ef3"/>
<path d="M4.5 7 L8.5 4 L8.5 8 L4.5 11.5 Z" fill="#a640a6"/></svg><div class="t" style="left:95px;top:548px;font-size:12px;color:#000;font-weight:400;">- Pulse Width</div>
<div class="a" style="left:211px;top:81px;width:931px;height:26px;background:#f0f0f0;border-top:1px solid #a0a0a0;border-right:1px solid #a0a0a0"></div><div class="a" style="left:211px;top:82px;width:929px;height:1px;background:#f6f6f6;"></div><div class="a" style="left:1140px;top:82px;width:1px;height:23px;background:#f6f6f6;"></div><div class="a" style="left:211px;top:106px;width:931px;height:1px;background:#a0a0a8;"></div><div class="a" style="left:211px;top:105px;width:931px;height:1px;background:#f6f6f6;"></div><svg style="left:216px;top:89px" width="6" height="9" viewBox="0 0 6 9"><path d="M5.3 0.5 V8.5 L0.7 4.5 Z" fill="none" stroke="#000" stroke-width="1"/></svg><svg style="left:1125px;top:89px" width="6" height="10" viewBox="0 0 6 10"><path d="M0.7 0.5 V9 L5.3 4.8 Z" fill="none" stroke="#000" stroke-width="1"/></svg><svg style="left:226px;top:82px" width="82" height="26" viewBox="0 0 82 26">
<defs><linearGradient id="gtab" x1="0" y1="0" x2="0" y2="1"><stop offset="0" stop-color="#fffdc0"/><stop offset="0.1" stop-color="#fffa94"/><stop offset="0.5" stop-color="#fff28a"/><stop offset="0.62" stop-color="#ffdd7c"/><stop offset="1" stop-color="#fed87a"/></linearGradient></defs>
<path d="M1 24.5 L24 1.5 H77.5 Q80 1.5 80 4 V25 H1 Z" fill="url(#gtab)"/>
<path d="M1.5 24.5 L24 1.8 H77.5 Q80.2 1.8 80.2 4.5 V24.5" fill="none" stroke="#505050" stroke-width="1"/>
<path d="M3 24.5 L24.8 2.8" stroke="#fff" stroke-width="0.8" opacity="0.8"/>
</svg><div class="t" style="left:262px;top:89px;font-size:12px;color:#000;font-weight:700;letter-spacing:-0.4px">Scope</div><div class="a" style="left:211px;top:107px;width:931px;height:396px;background:linear-gradient(to right,#fcda78 0%,#feea86 50%,#fff692 100%);border-right:1px solid #a0a0a0;border-bottom:1px solid #a0a0a0"></div><div class="a" style="left:215px;top:110px;width:922px;height:388px;background:#333;border-left:1px solid #8a8e96;border-top:1px solid #8a8e96;border-right:2px solid #f2f2f2;border-bottom:2px solid #f2f2f2"></div><div class="a" style="left:216px;top:111px;width:1px;height:385px;background:#5c5c5c;"></div><div class="a" style="left:216px;top:111px;width:919px;height:1px;background:#5c5c5c;"></div><div class="a" style="left:217px;top:112px;width:1px;height:384px;background:#2c2c2c;"></div><div class="a" style="left:217px;top:112px;width:918px;height:1px;background:#2c2c2c;"></div><div class="a" style="left:210px;top:81px;width:1px;height:626px;background:#9a9ea6;"></div><div class="a" style="left:219px;top:114px;width:50px;height:21px;background:#000;"></div><div class="t" style="left:227px;top:118.5px;font-size:12px;color:#00ff00;font-weight:400;">Trig'D</div><div class="a" style="left:1030px;top:114px;width:102px;height:22px;background:#000;"></div><svg style="left:1033px;top:115px" width="14" height="19" viewBox="0 0 14 19">
<path d="M1 17.5 H7.5 V1.5 H11" stroke="#ffff00" stroke-width="1.3" fill="none"/>
<path d="M2.5 10.5 L7.5 5.5 L12.5 10.5 Z" fill="#ffff00"/></svg><div class="a" style="left:1049px;top:117px;width:27px;height:15px;background:#ffff00;"></div><div class="t" style="left:1050px;top:118.5px;font-size:12px;color:#000;font-weight:400;">CH1</div><div class="t" style="left:1087px;top:118.5px;font-size:12px;color:#ffff00;font-weight:400;">0.00uV</div><div class="a" style="left:217px;top:138px;width:918px;height:2px;background:#f4f4f4;"></div><div class="a" style="left:236px;top:156px;width:881px;height:316px;background:#000;border:2px solid #ececec"></div><div class="a" style="left:238px;top:158px;width:877px;height:312px;background:transparent;border:1px solid #7c7c7c"></div><svg style="left:0;top:0" width="1366" height="768" viewBox="0 0 1366 768">
<g fill="#d4d4d4"><rect x="239" y="165" width="1" height="1"/><rect x="239" y="173" width="1" height="1"/><rect x="239" y="181" width="1" height="1"/><rect x="239" y="188" width="1" height="1"/><rect x="239" y="196" width="1" height="1"/><rect x="239" y="204" width="1" height="1"/><rect x="239" y="212" width="1" height="1"/><rect x="239" y="220" width="1" height="1"/><rect x="239" y="228" width="1" height="1"/><rect x="239" y="236" width="1" height="1"/><rect x="239" y="243" width="1" height="1"/><rect x="239" y="251" width="1" height="1"/><rect x="239" y="259" width="1" height="1"/><rect x="239" y="267" width="1" height="1"/><rect x="239" y="275" width="1" height="1"/><rect x="239" y="283" width="1" height="1"/><rect x="239" y="291" width="1" height="1"/><rect x="239" y="298" width="1" height="1"/><rect x="239" y="306" width="1" height="1"/><rect x="239" y="314" width="1" height="1"/><rect x="239" y="322" width="1" height="1"/><rect x="239" y="330" width="1" height="1"/><rect x="239" y="338" width="1" height="1"/><rect x="239" y="346" width="1" height="1"/><rect x="239" y="353" width="1" height="1"/><rect x="239" y="361" width="1" height="1"/><rect x="239" y="369" width="1" height="1"/><rect x="239" y="377" width="1" height="1"/><rect x="239" y="385" width="1" height="1"/><rect x="239" y="393" width="1" height="1"/><rect x="239" y="401" width="1" height="1"/><rect x="239" y="408" width="1" height="1"/><rect x="239" y="416" width="1" height="1"/><rect x="239" y="424" width="1" height="1"/><rect x="239" y="432" width="1" height="1"/><rect x="239" y="440" width="1" height="1"/><rect x="239" y="448" width="1" height="1"/><rect x="239" y="456" width="1" height="1"/><rect x="239" y="463" width="1" height="1"/><rect x="325" y="165" width="1" height="1"/><rect x="325" y="173" width="1" height="1"/><rect x="325" y="181" width="1" height="1"/><rect x="325" y="188" width="1" height="1"/><rect x="325" y="196" width="1" height="1"/><rect x="325" y="204" width="1" height="1"/><rect x="325" y="212" width="1" height="1"/><rect x="325" y="220" width="1" height="1"/><rect x="325" y="228" width="1" height="1"/><rect x="325" y="236" width="1" height="1"/><rect x="325" y="243" width="1" height="1"/><rect x="325" y="251" width="1" height="1"/><rect x="325" y="259" width="1" height="1"/><rect x="325" y="267" width="1" height="1"/><rect x="325" y="275" width="1" height="1"/><rect x="325" y="283" width="1" height="1"/><rect x="325" y="291" width="1" height="1"/><rect x="325" y="298" width="1" height="1"/><rect x="325" y="306" width="1" height="1"/><rect x="325" y="314" width="1" height="1"/><rect x="325" y="322" width="1" height="1"/><rect x="325" y="330" width="1" height="1"/><rect x="325" y="338" width="1" height="1"/><rect x="325" y="346" width="1" height="1"/><rect x="325" y="353" width="1" height="1"/><rect x="325" y="361" width="1" height="1"/><rect x="325" y="369" width="1" height="1"/><rect x="325" y="377" width="1" height="1"/><rect x="325" y="385" width="1" height="1"/><rect x="325" y="393" width="1" height="1"/><rect x="325" y="401" width="1" height="1"/><rect x="325" y="408" width="1" height="1"/><rect x="325" y="416" width="1" height="1"/><rect x="325" y="424" width="1" height="1"/><rect x="325" y="432" width="1" height="1"/><rect x="325" y="440" width="1" height="1"/><rect x="325" y="448" width="1" height="1"/><rect x="325" y="456" width="1" height="1"/><rect x="325" y="463" width="1" height="1"/><rect x="413" y="165" width="1" height="1"/><rect x="413" y="173" width="1" height="1"/><rect x="413" y="181" width="1" height="1"/><rect x="413" y="188" width="1" height="1"/><rect x="413" y="196" width="1" height="1"/><rect x="413" y="204" width="1" height="1"/><rect x="413" y="212" width="1" height="1"/><rect x="413" y="220" width="1" height="1"/><rect x="413" y="228" width="1" height="1"/><rect x="413" y="236" width="1" height="1"/><rect x="413" y="243" width="1" height="1"/><rect x="413" y="251" width="1" height="1"/><rect x="413" y="259" width="1" height="1"/><rect x="413" y="267" width="1" height="1"/><rect x="413" y="275" width="1" height="1"/><rect x="413" y="283" width="1" height="1"/><rect x="413" y="291" width="1" height="1"/><rect x="413" y="298" width="1" height="1"/><rect x="413" y="306" width="1" height="1"/><rect x="413" y="314" width="1" height="1"/><rect x="413" y="322" width="1" height="1"/><rect x="413" y="330" width="1" height="1"/><rect x="413" y="338" width="1" height="1"/><rect x="413" y="346" width="1" height="1"/><rect x="413" y="353" width="1" height="1"/><rect x="413" y="361" width="1" height="1"/><rect x="413" y="369" width="1" height="1"/><rect x="413" y="377" width="1" height="1"/><rect x="413" y="385" width="1" height="1"/><rect x="413" y="393" width="1" height="1"/><rect x="413" y="401" width="1" height="1"/><rect x="413" y="408" width="1" height="1"/><rect x="413" y="416" width="1" height="1"/><rect x="413" y="424" width="1" height="1"/><rect x="413" y="432" width="1" height="1"/><rect x="413" y="440" width="1" height="1"/><rect x="413" y="448" width="1" height="1"/><rect x="413" y="456" width="1" height="1"/><rect x="413" y="463" width="1" height="1"/><rect x="500" y="165" width="1" height="1"/><rect x="500" y="173" width="1" height="1"/><rect x="500" y="181" width="1" height="1"/><rect x="500" y="188" width="1" height="1"/><rect x="500" y="196" width="1" height="1"/><rect x="500" y="204" width="1" height="1"/><rect x="500" y="212" width="1" height="1"/><rect x="500" y="220" width="1" height="1"/><rect x="500" y="228" width="1" height="1"/><rect x="500" y="236" width="1" height="1"/><rect x="500" y="243" width="1" height="1"/><rect x="500" y="251" width="1" height="1"/><rect x="500" y="259" width="1" height="1"/><rect x="500" y="267" width="1" height="1"/><rect x="500" y="275" width="1" height="1"/><rect x="500" y="283" width="1" height="1"/><rect x="500" y="291" width="1" height="1"/><rect x="500" y="298" width="1" height="1"/><rect x="500" y="306" width="1" height="1"/><rect x="500" y="314" width="1" height="1"/><rect x="500" y="322" width="1" height="1"/><rect x="500" y="330" width="1" height="1"/><rect x="500" y="338" width="1" height="1"/><rect x="500" y="346" width="1" height="1"/><rect x="500" y="353" width="1" height="1"/><rect x="500" y="361" width="1" height="1"/><rect x="500" y="369" width="1" height="1"/><rect x="500" y="377" width="1" height="1"/><rect x="500" y="385" width="1" height="1"/><rect x="500" y="393" width="1" height="1"/><rect x="500" y="401" width="1" height="1"/><rect x="500" y="408" width="1" height="1"/><rect x="500" y="416" width="1" height="1"/><rect x="500" y="424" width="1" height="1"/><rect x="500" y="432" width="1" height="1"/><rect x="500" y="440" width="1" height="1"/><rect x="500" y="448" width="1" height="1"/><rect x="500" y="456" width="1" height="1"/><rect x="500" y="463" width="1" height="1"/><rect x="588" y="165" width="1" height="1"/><rect x="588" y="173" width="1" height="1"/><rect x="588" y="181" width="1" height="1"/><rect x="588" y="188" width="1" height="1"/><rect x="588" y="196" width="1" height="1"/><rect x="588" y="204" width="1" height="1"/><rect x="588" y="212" width="1" height="1"/><rect x="588" y="220" width="1" height="1"/><rect x="588" y="228" width="1" height="1"/><rect x="588" y="236" width="1" height="1"/><rect x="588" y="243" width="1" height="1"/><rect x="588" y="251" width="1" height="1"/><rect x="588" y="259" width="1" height="1"/><rect x="588" y="267" width="1" height="1"/><rect x="588" y="275" width="1" height="1"/><rect x="588" y="283" width="1" height="1"/><rect x="588" y="291" width="1" height="1"/><rect x="588" y="298" width="1" height="1"/><rect x="588" y="306" width="1" height="1"/><rect x="588" y="314" width="1" height="1"/><rect x="588" y="322" width="1" height="1"/><rect x="588" y="330" width="1" height="1"/><rect x="588" y="338" width="1" height="1"/><rect x="588" y="346" width="1" height="1"/><rect x="588" y="353" width="1" height="1"/><rect x="588" y="361" width="1" height="1"/><rect x="588" y="369" width="1" height="1"/><rect x="588" y="377" width="1" height="1"/><rect x="588" y="385" width="1" height="1"/><rect x="588" y="393" width="1" height="1"/><rect x="588" y="401" width="1" height="1"/><rect x="588" y="408" width="1" height="1"/><rect x="588" y="416" width="1" height="1"/><rect x="588" y="424" width="1" height="1"/><rect x="588" y="432" width="1" height="1"/><rect x="588" y="440" width="1" height="1"/><rect x="588" y="448" width="1" height="1"/><rect x="588" y="456" width="1" height="1"/><rect x="588" y="463" width="1" height="1"/><rect x="764" y="165" width="1" height="1"/><rect x="764" y="173" width="1" height="1"/><rect x="764" y="181" width="1" height="1"/><rect x="764" y="188" width="1" height="1"/><rect x="764" y="196" width="1" height="1"/><rect x="764" y="204" width="1" height="1"/><rect x="764" y="212" width="1" height="1"/><rect x="764" y="220" width="1" height="1"/><rect x="764" y="228" width="1" height="1"/><rect x="764" y="236" width="1" height="1"/><rect x="764" y="243" width="1" height="1"/><rect x="764" y="251" width="1" height="1"/><rect x="764" y="259" width="1" height="1"/><rect x="764" y="267" width="1" height="1"/><rect x="764" y="275" width="1" height="1"/><rect x="764" y="283" width="1" height="1"/><rect x="764" y="291" width="1" height="1"/><rect x="764" y="298" width="1" height="1"/><rect x="764" y="306" width="1" height="1"/><rect x="764" y="314" width="1" height="1"/><rect x="764" y="322" width="1" height="1"/><rect x="764" y="330" width="1" height="1"/><rect x="764" y="338" width="1" height="1"/><rect x="764" y="346" width="1" height="1"/><rect x="764" y="353" width="1" height="1"/><rect x="764" y="361" width="1" height="1"/><rect x="764" y="369" width="1" height="1"/><rect x="764" y="377" width="1" height="1"/><rect x="764" y="385" width="1" height="1"/><rect x="764" y="393" width="1" height="1"/><rect x="764" y="401" width="1" height="1"/><rect x="764" y="408" width="1" height="1"/><rect x="764" y="416" width="1" height="1"/><rect x="764" y="424" width="1" height="1"/><rect x="764" y="432" width="1" height="1"/><rect x="764" y="440" width="1" height="1"/><rect x="764" y="448" width="1" height="1"/><rect x="764" y="456" width="1" height="1"/><rect x="764" y="463" width="1" height="1"/><rect x="852" y="165" width="1" height="1"/><rect x="852" y="173" width="1" height="1"/><rect x="852" y="181" width="1" height="1"/><rect x="852" y="188" width="1" height="1"/><rect x="852" y="196" width="1" height="1"/><rect x="852" y="204" width="1" height="1"/><rect x="852" y="212" width="1" height="1"/><rect x="852" y="220" width="1" height="1"/><rect x="852" y="228" width="1" height="1"/><rect x="852" y="236" width="1" height="1"/><rect x="852" y="243" width="1" height="1"/><rect x="852" y="251" width="1" height="1"/><rect x="852" y="259" width="1" height="1"/><rect x="852" y="267" width="1" height="1"/><rect x="852" y="275" width="1" height="1"/><rect x="852" y="283" width="1" height="1"/><rect x="852" y="291" width="1" height="1"/><rect x="852" y="298" width="1" height="1"/><rect x="852" y="306" width="1" height="1"/><rect x="852" y="314" width="1" height="1"/><rect x="852" y="322" width="1" height="1"/><rect x="852" y="330" width="1" height="1"/><rect x="852" y="338" width="1" height="1"/><rect x="852" y="346" width="1" height="1"/><rect x="852" y="353" width="1" height="1"/><rect x="852" y="361" width="1" height="1"/><rect x="852" y="369" width="1" height="1"/><rect x="852" y="377" width="1" height="1"/><rect x="852" y="385" width="1" height="1"/><rect x="852" y="393" width="1" height="1"/><rect x="852" y="401" width="1" height="1"/><rect x="852" y="408" width="1" height="1"/><rect x="852" y="416" width="1" height="1"/><rect x="852" y="424" width="1" height="1"/><rect x="852" y="432" width="1" height="1"/><rect x="852" y="440" width="1" height="1"/><rect x="852" y="448" width="1" height="1"/><rect x="852" y="456" width="1" height="1"/><rect x="852" y="463" width="1" height="1"/><rect x="939" y="165" width="1" height="1"/><rect x="939" y="173" width="1" height="1"/><rect x="939" y="181" width="1" height="1"/><rect x="939" y="188" width="1" height="1"/><rect x="939" y="196" width="1" height="1"/><rect x="939" y="204" width="1" height="1"/><rect x="939" y="212" width="1" height="1"/><rect x="939" y="220" width="1" height="1"/><rect x="939" y="228" width="1" height="1"/><rect x="939" y="236" width="1" height="1"/><rect x="939" y="243" width="1" height="1"/><rect x="939" y="251" width="1" height="1"/><rect x="939" y="259" width="1" height="1"/><rect x="939" y="267" width="1" height="1"/><rect x="939" y="275" width="1" height="1"/><rect x="939" y="283" width="1" height="1"/><rect x="939" y="291" width="1" height="1"/><rect x="939" y="298" width="1" height="1"/><rect x="939" y="306" width="1" height="1"/><rect x="939" y="314" width="1" height="1"/><rect x="939" y="322" width="1" height="1"/><rect x="939" y="330" width="1" height="1"/><rect x="939" y="338" width="1" height="1"/><rect x="939" y="346" width="1" height="1"/><rect x="939" y="353" width="1" height="1"/><rect x="939" y="361" width="1" height="1"/><rect x="939" y="369" width="1" height="1"/><rect x="939" y="377" width="1" height="1"/><rect x="939" y="385" width="1" height="1"/><rect x="939" y="393" width="1" height="1"/><rect x="939" y="401" width="1" height="1"/><rect x="939" y="408" width="1" height="1"/><rect x="939" y="416" width="1" height="1"/><rect x="939" y="424" width="1" height="1"/><rect x="939" y="432" width="1" height="1"/><rect x="939" y="440" width="1" height="1"/><rect x="939" y="448" width="1" height="1"/><rect x="939" y="456" width="1" height="1"/><rect x="939" y="463" width="1" height="1"/><rect x="1027" y="165" width="1" height="1"/><rect x="1027" y="173" width="1" height="1"/><rect x="1027" y="181" width="1" height="1"/><rect x="1027" y="188" width="1" height="1"/><rect x="1027" y="196" width="1" height="1"/><rect x="1027" y="204" width="1" height="1"/><rect x="1027" y="212" width="1" height="1"/><rect x="1027" y="220" width="1" height="1"/><rect x="1027" y="228" width="1" height="1"/><rect x="1027" y="236" width="1" height="1"/><rect x="1027" y="243" width="1" height="1"/><rect x="1027" y="251" width="1" height="1"/><rect x="1027" y="259" width="1" height="1"/><rect x="1027" y="267" width="1" height="1"/><rect x="1027" y="275" width="1" height="1"/><rect x="1027" y="283" width="1" height="1"/><rect x="1027" y="291" width="1" height="1"/><rect x="1027" y="298" width="1" height="1"/><rect x="1027" y="306" width="1" height="1"/><rect x="1027" y="314" width="1" height="1"/><rect x="1027" y="322" width="1" height="1"/><rect x="1027" y="330" width="1" height="1"/><rect x="1027" y="338" width="1" height="1"/><rect x="1027" y="346" width="1" height="1"/><rect x="1027" y="353" width="1" height="1"/><rect x="1027" y="361" width="1" height="1"/><rect x="1027" y="369" width="1" height="1"/><rect x="1027" y="377" width="1" height="1"/><rect x="1027" y="385" width="1" height="1"/><rect x="1027" y="393" width="1" height="1"/><rect x="1027" y="401" width="1" height="1"/><rect x="1027" y="408" width="1" height="1"/><rect x="1027" y="416" width="1" height="1"/><rect x="1027" y="424" width="1" height="1"/><rect x="1027" y="432" width="1" height="1"/><rect x="1027" y="440" width="1" height="1"/><rect x="1027" y="448" width="1" height="1"/><rect x="1027" y="456" width="1" height="1"/><rect x="1027" y="463" width="1" height="1"/><rect x="1113" y="165" width="1" height="1"/><rect x="1113" y="173" width="1" height="1"/><rect x="1113" y="181" width="1" height="1"/><rect x="1113" y="188" width="1" height="1"/><rect x="1113" y="196" width="1" height="1"/><rect x="1113" y="204" width="1" height="1"/><rect x="1113" y="212" width="1" height="1"/><rect x="1113" y="220" width="1" height="1"/><rect x="1113" y="228" width="1" height="1"/><rect x="1113" y="236" width="1" height="1"/><rect x="1113" y="243" width="1" height="1"/><rect x="1113" y="251" width="1" height="1"/><rect x="1113" y="259" width="1" height="1"/><rect x="1113" y="267" width="1" height="1"/><rect x="1113" y="275" width="1" height="1"/><rect x="1113" y="283" width="1" height="1"/><rect x="1113" y="291" width="1" height="1"/><rect x="1113" y="298" width="1" height="1"/><rect x="1113" y="306" width="1" height="1"/><rect x="1113" y="314" width="1" height="1"/><rect x="1113" y="322" width="1" height="1"/><rect x="1113" y="330" width="1" height="1"/><rect x="1113" y="338" width="1" height="1"/><rect x="1113" y="346" width="1" height="1"/><rect x="1113" y="353" width="1" height="1"/><rect x="1113" y="361" width="1" height="1"/><rect x="1113" y="369" width="1" height="1"/><rect x="1113" y="377" width="1" height="1"/><rect x="1113" y="385" width="1" height="1"/><rect x="1113" y="393" width="1" height="1"/><rect x="1113" y="401" width="1" height="1"/><rect x="1113" y="408" width="1" height="1"/><rect x="1113" y="416" width="1" height="1"/><rect x="1113" y="424" width="1" height="1"/><rect x="1113" y="432" width="1" height="1"/><rect x="1113" y="440" width="1" height="1"/><rect x="1113" y="448" width="1" height="1"/><rect x="1113" y="456" width="1" height="1"/><rect x="1113" y="463" width="1" height="1"/><rect x="255" y="159" width="1" height="1"/><rect x="272" y="159" width="1" height="1"/><rect x="290" y="159" width="1" height="1"/><rect x="307" y="159" width="1" height="1"/><rect x="325" y="159" width="1" height="1"/><rect x="342" y="159" width="1" height="1"/><rect x="360" y="159" width="1" height="1"/><rect x="377" y="159" width="1" height="1"/><rect x="395" y="159" width="1" height="1"/><rect x="413" y="159" width="1" height="1"/><rect x="430" y="159" width="1" height="1"/><rect x="448" y="159" width="1" height="1"/><rect x="465" y="159" width="1" height="1"/><rect x="483" y="159" width="1" height="1"/><rect x="500" y="159" width="1" height="1"/><rect x="518" y="159" width="1" height="1"/><rect x="536" y="159" width="1" height="1"/><rect x="553" y="159" width="1" height="1"/><rect x="571" y="159" width="1" height="1"/><rect x="588" y="159" width="1" height="1"/><rect x="606" y="159" width="1" height="1"/><rect x="623" y="159" width="1" height="1"/><rect x="641" y="159" width="1" height="1"/><rect x="658" y="159" width="1" height="1"/><rect x="676" y="159" width="1" height="1"/><rect x="694" y="159" width="1" height="1"/><rect x="711" y="159" width="1" height="1"/><rect x="729" y="159" width="1" height="1"/><rect x="746" y="159" width="1" height="1"/><rect x="764" y="159" width="1" height="1"/><rect x="781" y="159" width="1" height="1"/><rect x="799" y="159" width="1" height="1"/><rect x="816" y="159" width="1" height="1"/><rect x="834" y="159" width="1" height="1"/><rect x="852" y="159" width="1" height="1"/><rect x="869" y="159" width="1" height="1"/><rect x="887" y="159" width="1" height="1"/><rect x="904" y="159" width="1" height="1"/><rect x="922" y="159" width="1" height="1"/><rect x="939" y="159" width="1" height="1"/><rect x="957" y="159" width="1" height="1"/><rect x="975" y="159" width="1" height="1"/><rect x="992" y="159" width="1" height="1"/><rect x="1010" y="159" width="1" height="1"/><rect x="1027" y="159" width="1" height="1"/><rect x="1045" y="159" width="1" height="1"/><rect x="1062" y="159" width="1" height="1"/><rect x="1080" y="159" width="1" height="1"/><rect x="1097" y="159" width="1" height="1"/><rect x="255" y="196" width="1" height="1"/><rect x="272" y="196" width="1" height="1"/><rect x="290" y="196" width="1" height="1"/><rect x="307" y="196" width="1" height="1"/><rect x="325" y="196" width="1" height="1"/><rect x="342" y="196" width="1" height="1"/><rect x="360" y="196" width="1" height="1"/><rect x="377" y="196" width="1" height="1"/><rect x="395" y="196" width="1" height="1"/><rect x="413" y="196" width="1" height="1"/><rect x="430" y="196" width="1" height="1"/><rect x="448" y="196" width="1" height="1"/><rect x="465" y="196" width="1" height="1"/><rect x="483" y="196" width="1" height="1"/><rect x="500" y="196" width="1" height="1"/><rect x="518" y="196" width="1" height="1"/><rect x="536" y="196" width="1" height="1"/><rect x="553" y="196" width="1" height="1"/><rect x="571" y="196" width="1" height="1"/><rect x="588" y="196" width="1" height="1"/><rect x="606" y="196" width="1" height="1"/><rect x="623" y="196" width="1" height="1"/><rect x="641" y="196" width="1" height="1"/><rect x="658" y="196" width="1" height="1"/><rect x="676" y="196" width="1" height="1"/><rect x="694" y="196" width="1" height="1"/><rect x="711" y="196" width="1" height="1"/><rect x="729" y="196" width="1" height="1"/><rect x="746" y="196" width="1" height="1"/><rect x="764" y="196" width="1" height="1"/><rect x="781" y="196" width="1" height="1"/><rect x="799" y="196" width="1" height="1"/><rect x="816" y="196" width="1" height="1"/><rect x="834" y="196" width="1" height="1"/><rect x="852" y="196" width="1" height="1"/><rect x="869" y="196" width="1" height="1"/><rect x="887" y="196" width="1" height="1"/><rect x="904" y="196" width="1" height="1"/><rect x="922" y="196" width="1" height="1"/><rect x="939" y="196" width="1" height="1"/><rect x="957" y="196" width="1" height="1"/><rect x="975" y="196" width="1" height="1"/><rect x="992" y="196" width="1" height="1"/><rect x="1010" y="196" width="1" height="1"/><rect x="1027" y="196" width="1" height="1"/><rect x="1045" y="196" width="1" height="1"/><rect x="1062" y="196" width="1" height="1"/><rect x="1080" y="196" width="1" height="1"/><rect x="1097" y="196" width="1" height="1"/><rect x="255" y="236" width="1" height="1"/><rect x="272" y="236" width="1" height="1"/><rect x="290" y="236" width="1" height="1"/><rect x="307" y="236" width="1" height="1"/><rect x="325" y="236" width="1" height="1"/><rect x="342" y="236" width="1" height="1"/><rect x="360" y="236" width="1" height="1"/><rect x="377" y="236" width="1" height="1"/><rect x="395" y="236" width="1" height="1"/><rect x="413" y="236" width="1" height="1"/><rect x="430" y="236" width="1" height="1"/><rect x="448" y="236" width="1" height="1"/><rect x="465" y="236" width="1" height="1"/><rect x="483" y="236" width="1" height="1"/><rect x="500" y="236" width="1" height="1"/><rect x="518" y="236" width="1" height="1"/><rect x="536" y="236" width="1" height="1"/><rect x="553" y="236" width="1" height="1"/><rect x="571" y="236" width="1" height="1"/><rect x="588" y="236" width="1" height="1"/><rect x="606" y="236" width="1" height="1"/><rect x="623" y="236" width="1" height="1"/><rect x="641" y="236" width="1" height="1"/><rect x="658" y="236" width="1" height="1"/><rect x="676" y="236" width="1" height="1"/><rect x="694" y="236" width="1" height="1"/><rect x="711" y="236" width="1" height="1"/><rect x="729" y="236" width="1" height="1"/><rect x="746" y="236" width="1" height="1"/><rect x="764" y="236" width="1" height="1"/><rect x="781" y="236" width="1" height="1"/><rect x="799" y="236" width="1" height="1"/><rect x="816" y="236" width="1" height="1"/><rect x="834" y="236" width="1" height="1"/><rect x="852" y="236" width="1" height="1"/><rect x="869" y="236" width="1" height="1"/><rect x="887" y="236" width="1" height="1"/><rect x="904" y="236" width="1" height="1"/><rect x="922" y="236" width="1" height="1"/><rect x="939" y="236" width="1" height="1"/><rect x="957" y="236" width="1" height="1"/><rect x="975" y="236" width="1" height="1"/><rect x="992" y="236" width="1" height="1"/><rect x="1010" y="236" width="1" height="1"/><rect x="1027" y="236" width="1" height="1"/><rect x="1045" y="236" width="1" height="1"/><rect x="1062" y="236" width="1" height="1"/><rect x="1080" y="236" width="1" height="1"/><rect x="1097" y="236" width="1" height="1"/><rect x="255" y="275" width="1" height="1"/><rect x="272" y="275" width="1" height="1"/><rect x="290" y="275" width="1" height="1"/><rect x="307" y="275" width="1" height="1"/><rect x="325" y="275" width="1" height="1"/><rect x="342" y="275" width="1" height="1"/><rect x="360" y="275" width="1" height="1"/><rect x="377" y="275" width="1" height="1"/><rect x="395" y="275" width="1" height="1"/><rect x="413" y="275" width="1" height="1"/><rect x="430" y="275" width="1" height="1"/><rect x="448" y="275" width="1" height="1"/><rect x="465" y="275" width="1" height="1"/><rect x="483" y="275" width="1" height="1"/><rect x="500" y="275" width="1" height="1"/><rect x="518" y="275" width="1" height="1"/><rect x="536" y="275" width="1" height="1"/><rect x="553" y="275" width="1" height="1"/><rect x="571" y="275" width="1" height="1"/><rect x="588" y="275" width="1" height="1"/><rect x="606" y="275" width="1" height="1"/><rect x="623" y="275" width="1" height="1"/><rect x="641" y="275" width="1" height="1"/><rect x="658" y="275" width="1" height="1"/><rect x="676" y="275" width="1" height="1"/><rect x="694" y="275" width="1" height="1"/><rect x="711" y="275" width="1" height="1"/><rect x="729" y="275" width="1" height="1"/><rect x="746" y="275" width="1" height="1"/><rect x="764" y="275" width="1" height="1"/><rect x="781" y="275" width="1" height="1"/><rect x="799" y="275" width="1" height="1"/><rect x="816" y="275" width="1" height="1"/><rect x="834" y="275" width="1" height="1"/><rect x="852" y="275" width="1" height="1"/><rect x="869" y="275" width="1" height="1"/><rect x="887" y="275" width="1" height="1"/><rect x="904" y="275" width="1" height="1"/><rect x="922" y="275" width="1" height="1"/><rect x="939" y="275" width="1" height="1"/><rect x="957" y="275" width="1" height="1"/><rect x="975" y="275" width="1" height="1"/><rect x="992" y="275" width="1" height="1"/><rect x="1010" y="275" width="1" height="1"/><rect x="1027" y="275" width="1" height="1"/><rect x="1045" y="275" width="1" height="1"/><rect x="1062" y="275" width="1" height="1"/><rect x="1080" y="275" width="1" height="1"/><rect x="1097" y="275" width="1" height="1"/><rect x="255" y="353" width="1" height="1"/><rect x="272" y="353" width="1" height="1"/><rect x="290" y="353" width="1" height="1"/><rect x="307" y="353" width="1" height="1"/><rect x="325" y="353" width="1" height="1"/><rect x="342" y="353" width="1" height="1"/><rect x="360" y="353" width="1" height="1"/><rect x="377" y="353" width="1" height="1"/><rect x="395" y="353" width="1" height="1"/><rect x="413" y="353" width="1" height="1"/><rect x="430" y="353" width="1" height="1"/><rect x="448" y="353" width="1" height="1"/><rect x="465" y="353" width="1" height="1"/><rect x="483" y="353" width="1" height="1"/><rect x="500" y="353" width="1" height="1"/><rect x="518" y="353" width="1" height="1"/><rect x="536" y="353" width="1" height="1"/><rect x="553" y="353" width="1" height="1"/><rect x="571" y="353" width="1" height="1"/><rect x="588" y="353" width="1" height="1"/><rect x="606" y="353" width="1" height="1"/><rect x="623" y="353" width="1" height="1"/><rect x="641" y="353" width="1" height="1"/><rect x="658" y="353" width="1" height="1"/><rect x="676" y="353" width="1" height="1"/><rect x="694" y="353" width="1" height="1"/><rect x="711" y="353" width="1" height="1"/><rect x="729" y="353" width="1" height="1"/><rect x="746" y="353" width="1" height="1"/><rect x="764" y="353" width="1" height="1"/><rect x="781" y="353" width="1" height="1"/><rect x="799" y="353" width="1" height="1"/><rect x="816" y="353" width="1" height="1"/><rect x="834" y="353" width="1" height="1"/><rect x="852" y="353" width="1" height="1"/><rect x="869" y="353" width="1" height="1"/><rect x="887" y="353" width="1" height="1"/><rect x="904" y="353" width="1" height="1"/><rect x="922" y="353" width="1" height="1"/><rect x="939" y="353" width="1" height="1"/><rect x="957" y="353" width="1" height="1"/><rect x="975" y="353" width="1" height="1"/><rect x="992" y="353" width="1" height="1"/><rect x="1010" y="353" width="1" height="1"/><rect x="1027" y="353" width="1" height="1"/><rect x="1045" y="353" width="1" height="1"/><rect x="1062" y="353" width="1" height="1"/><rect x="1080" y="353" width="1" height="1"/><rect x="1097" y="353" width="1" height="1"/><rect x="255" y="393" width="1" height="1"/><rect x="272" y="393" width="1" height="1"/><rect x="290" y="393" width="1" height="1"/><rect x="307" y="393" width="1" height="1"/><rect x="325" y="393" width="1" height="1"/><rect x="342" y="393" width="1" height="1"/><rect x="360" y="393" width="1" height="1"/><rect x="377" y="393" width="1" height="1"/><rect x="395" y="393" width="1" height="1"/><rect x="413" y="393" width="1" height="1"/><rect x="430" y="393" width="1" height="1"/><rect x="448" y="393" width="1" height="1"/><rect x="465" y="393" width="1" height="1"/><rect x="483" y="393" width="1" height="1"/><rect x="500" y="393" width="1" height="1"/><rect x="518" y="393" width="1" height="1"/><rect x="536" y="393" width="1" height="1"/><rect x="553" y="393" width="1" height="1"/><rect x="571" y="393" width="1" height="1"/><rect x="588" y="393" width="1" height="1"/><rect x="606" y="393" width="1" height="1"/><rect x="623" y="393" width="1" height="1"/><rect x="641" y="393" width="1" height="1"/><rect x="658" y="393" width="1" height="1"/><rect x="676" y="393" width="1" height="1"/><rect x="694" y="393" width="1" height="1"/><rect x="711" y="393" width="1" height="1"/><rect x="729" y="393" width="1" height="1"/><rect x="746" y="393" width="1" height="1"/><rect x="764" y="393" width="1" height="1"/><rect x="781" y="393" width="1" height="1"/><rect x="799" y="393" width="1" height="1"/><rect x="816" y="393" width="1" height="1"/><rect x="834" y="393" width="1" height="1"/><rect x="852" y="393" width="1" height="1"/><rect x="869" y="393" width="1" height="1"/><rect x="887" y="393" width="1" height="1"/><rect x="904" y="393" width="1" height="1"/><rect x="922" y="393" width="1" height="1"/><rect x="939" y="393" width="1" height="1"/><rect x="957" y="393" width="1" height="1"/><rect x="975" y="393" width="1" height="1"/><rect x="992" y="393" width="1" height="1"/><rect x="1010" y="393" width="1" height="1"/><rect x="1027" y="393" width="1" height="1"/><rect x="1045" y="393" width="1" height="1"/><rect x="1062" y="393" width="1" height="1"/><rect x="1080" y="393" width="1" height="1"/><rect x="1097" y="393" width="1" height="1"/><rect x="255" y="432" width="1" height="1"/><rect x="272" y="432" width="1" height="1"/><rect x="290" y="432" width="1" height="1"/><rect x="307" y="432" width="1" height="1"/><rect x="325" y="432" width="1" height="1"/><rect x="342" y="432" width="1" height="1"/><rect x="360" y="432" width="1" height="1"/><rect x="377" y="432" width="1" height="1"/><rect x="395" y="432" width="1" height="1"/><rect x="413" y="432" width="1" height="1"/><rect x="430" y="432" width="1" height="1"/><rect x="448" y="432" width="1" height="1"/><rect x="465" y="432" width="1" height="1"/><rect x="483" y="432" width="1" height="1"/><rect x="500" y="432" width="1" height="1"/><rect x="518" y="432" width="1" height="1"/><rect x="536" y="432" width="1" height="1"/><rect x="553" y="432" width="1" height="1"/><rect x="571" y="432" width="1" height="1"/><rect x="588" y="432" width="1" height="1"/><rect x="606" y="432" width="1" height="1"/><rect x="623" y="432" width="1" height="1"/><rect x="641" y="432" width="1" height="1"/><rect x="658" y="432" width="1" height="1"/><rect x="676" y="432" width="1" height="1"/><rect x="694" y="432" width="1" height="1"/><rect x="711" y="432" width="1" height="1"/><rect x="729" y="432" width="1" height="1"/><rect x="746" y="432" width="1" height="1"/><rect x="764" y="432" width="1" height="1"/><rect x="781" y="432" width="1" height="1"/><rect x="799" y="432" width="1" height="1"/><rect x="816" y="432" width="1" height="1"/><rect x="834" y="432" width="1" height="1"/><rect x="852" y="432" width="1" height="1"/><rect x="869" y="432" width="1" height="1"/><rect x="887" y="432" width="1" height="1"/><rect x="904" y="432" width="1" height="1"/><rect x="922" y="432" width="1" height="1"/><rect x="939" y="432" width="1" height="1"/><rect x="957" y="432" width="1" height="1"/><rect x="975" y="432" width="1" height="1"/><rect x="992" y="432" width="1" height="1"/><rect x="1010" y="432" width="1" height="1"/><rect x="1027" y="432" width="1" height="1"/><rect x="1045" y="432" width="1" height="1"/><rect x="1062" y="432" width="1" height="1"/><rect x="1080" y="432" width="1" height="1"/><rect x="1097" y="432" width="1" height="1"/><rect x="255" y="468" width="1" height="1"/><rect x="272" y="468" width="1" height="1"/><rect x="290" y="468" width="1" height="1"/><rect x="307" y="468" width="1" height="1"/><rect x="325" y="468" width="1" height="1"/><rect x="342" y="468" width="1" height="1"/><rect x="360" y="468" width="1" height="1"/><rect x="377" y="468" width="1" height="1"/><rect x="395" y="468" width="1" height="1"/><rect x="413" y="468" width="1" height="1"/><rect x="430" y="468" width="1" height="1"/><rect x="448" y="468" width="1" height="1"/><rect x="465" y="468" width="1" height="1"/><rect x="483" y="468" width="1" height="1"/><rect x="500" y="468" width="1" height="1"/><rect x="518" y="468" width="1" height="1"/><rect x="536" y="468" width="1" height="1"/><rect x="553" y="468" width="1" height="1"/><rect x="571" y="468" width="1" height="1"/><rect x="588" y="468" width="1" height="1"/><rect x="606" y="468" width="1" height="1"/><rect x="623" y="468" width="1" height="1"/><rect x="641" y="468" width="1" height="1"/><rect x="658" y="468" width="1" height="1"/><rect x="676" y="468" width="1" height="1"/><rect x="694" y="468" width="1" height="1"/><rect x="711" y="468" width="1" height="1"/><rect x="729" y="468" width="1" height="1"/><rect x="746" y="468" width="1" height="1"/><rect x="764" y="468" width="1" height="1"/><rect x="781" y="468" width="1" height="1"/><rect x="799" y="468" width="1" height="1"/><rect x="816" y="468" width="1" height="1"/><rect x="834" y="468" width="1" height="1"/><rect x="852" y="468" width="1" height="1"/><rect x="869" y="468" width="1" height="1"/><rect x="887" y="468" width="1" height="1"/><rect x="904" y="468" width="1" height="1"/><rect x="922" y="468" width="1" height="1"/><rect x="939" y="468" width="1" height="1"/><rect x="957" y="468" width="1" height="1"/><rect x="975" y="468" width="1" height="1"/><rect x="992" y="468" width="1" height="1"/><rect x="1010" y="468" width="1" height="1"/><rect x="1027" y="468" width="1" height="1"/><rect x="1045" y="468" width="1" height="1"/><rect x="1062" y="468" width="1" height="1"/><rect x="1080" y="468" width="1" height="1"/><rect x="1097" y="468" width="1" height="1"/></g>
<g fill="#c8c8c8"><rect x="676" y="158" width="1" height="312"/><rect x="238" y="314" width="877" height="1"/><rect x="255" y="311" width="1" height="7"/><rect x="272" y="311" width="1" height="7"/><rect x="290" y="311" width="1" height="7"/><rect x="307" y="311" width="1" height="7"/><rect x="325" y="311" width="1" height="7"/><rect x="342" y="311" width="1" height="7"/><rect x="360" y="311" width="1" height="7"/><rect x="377" y="311" width="1" height="7"/><rect x="395" y="311" width="1" height="7"/><rect x="413" y="311" width="1" height="7"/><rect x="430" y="311" width="1" height="7"/><rect x="448" y="311" width="1" height="7"/><rect x="465" y="311" width="1" height="7"/><rect x="483" y="311" width="1" height="7"/><rect x="500" y="311" width="1" height="7"/><rect x="518" y="311" width="1" height="7"/><rect x="536" y="311" width="1" height="7"/><rect x="553" y="311" width="1" height="7"/><rect x="571" y="311" width="1" height="7"/><rect x="588" y="311" width="1" height="7"/><rect x="606" y="311" width="1" height="7"/><rect x="623" y="311" width="1" height="7"/><rect x="641" y="311" width="1" height="7"/><rect x="658" y="311" width="1" height="7"/><rect x="676" y="311" width="1" height="7"/><rect x="694" y="311" width="1" height="7"/><rect x="711" y="311" width="1" height="7"/><rect x="729" y="311" width="1" height="7"/><rect x="746" y="311" width="1" height="7"/><rect x="764" y="311" width="1" height="7"/><rect x="781" y="311" width="1" height="7"/><rect x="799" y="311" width="1" height="7"/><rect x="816" y="311" width="1" height="7"/><rect x="834" y="311" width="1" height="7"/><rect x="852" y="311" width="1" height="7"/><rect x="869" y="311" width="1" height="7"/><rect x="887" y="311" width="1" height="7"/><rect x="904" y="311" width="1" height="7"/><rect x="922" y="311" width="1" height="7"/><rect x="939" y="311" width="1" height="7"/><rect x="957" y="311" width="1" height="7"/><rect x="975" y="311" width="1" height="7"/><rect x="992" y="311" width="1" height="7"/><rect x="1010" y="311" width="1" height="7"/><rect x="1027" y="311" width="1" height="7"/><rect x="1045" y="311" width="1" height="7"/><rect x="1062" y="311" width="1" height="7"/><rect x="1080" y="311" width="1" height="7"/><rect x="1097" y="311" width="1" height="7"/><rect x="673" y="165" width="7" height="1"/><rect x="673" y="173" width="7" height="1"/><rect x="673" y="181" width="7" height="1"/><rect x="673" y="188" width="7" height="1"/><rect x="673" y="196" width="7" height="1"/><rect x="673" y="204" width="7" height="1"/><rect x="673" y="212" width="7" height="1"/><rect x="673" y="220" width="7" height="1"/><rect x="673" y="228" width="7" height="1"/><rect x="673" y="236" width="7" height="1"/><rect x="673" y="243" width="7" height="1"/><rect x="673" y="251" width="7" height="1"/><rect x="673" y="259" width="7" height="1"/><rect x="673" y="267" width="7" height="1"/><rect x="673" y="275" width="7" height="1"/><rect x="673" y="283" width="7" height="1"/><rect x="673" y="291" width="7" height="1"/><rect x="673" y="298" width="7" height="1"/><rect x="673" y="306" width="7" height="1"/><rect x="673" y="314" width="7" height="1"/><rect x="673" y="322" width="7" height="1"/><rect x="673" y="330" width="7" height="1"/><rect x="673" y="338" width="7" height="1"/><rect x="673" y="346" width="7" height="1"/><rect x="673" y="353" width="7" height="1"/><rect x="673" y="361" width="7" height="1"/><rect x="673" y="369" width="7" height="1"/><rect x="673" y="377" width="7" height="1"/><rect x="673" y="385" width="7" height="1"/><rect x="673" y="393" width="7" height="1"/><rect x="673" y="401" width="7" height="1"/><rect x="673" y="408" width="7" height="1"/><rect x="673" y="416" width="7" height="1"/><rect x="673" y="424" width="7" height="1"/><rect x="673" y="432" width="7" height="1"/><rect x="673" y="440" width="7" height="1"/><rect x="673" y="448" width="7" height="1"/><rect x="673" y="456" width="7" height="1"/><rect x="673" y="463" width="7" height="1"/></g>
</svg><svg style="left:0;top:0" width="1366" height="768" viewBox="0 0 1366 768"><rect x="239" y="273" width="875" height="3" fill="#ebeb00"/><rect x="246" y="273" width="1" height="1" fill="#000"/><rect x="250" y="273" width="1" height="1" fill="#000"/><rect x="257" y="273" width="1" height="1" fill="#000"/><rect x="279" y="273" width="1" height="1" fill="#000"/><rect x="281" y="273" width="1" height="1" fill="#000"/><rect x="284" y="273" width="1" height="1" fill="#000"/><rect x="296" y="273" width="1" height="1" fill="#000"/><rect x="299" y="273" width="1" height="1" fill="#000"/><rect x="305" y="273" width="1" height="1" fill="#000"/><rect x="321" y="273" width="1" height="1" fill="#000"/><rect x="323" y="273" width="1" height="1" fill="#000"/><rect x="335" y="273" width="1" height="1" fill="#000"/><rect x="340" y="273" width="1" height="1" fill="#000"/><rect x="342" y="273" width="1" height="1" fill="#000"/><rect x="345" y="273" width="1" height="1" fill="#000"/><rect x="352" y="273" width="1" height="1" fill="#000"/><rect x="359" y="273" width="1" height="1" fill="#000"/><rect x="362" y="273" width="1" height="1" fill="#000"/><rect x="367" y="273" width="1" height="1" fill="#000"/><rect x="370" y="273" width="1" height="1" fill="#000"/><rect x="382" y="273" width="1" height="1" fill="#000"/><rect x="389" y="273" width="1" height="1" fill="#000"/><rect x="415" y="273" width="1" height="1" fill="#000"/><rect x="437" y="273" width="1" height="1" fill="#000"/><rect x="459" y="273" width="1" height="1" fill="#000"/><rect x="475" y="273" width="1" height="1" fill="#000"/><rect x="477" y="273" width="1" height="1" fill="#000"/><rect x="493" y="273" width="1" height="1" fill="#000"/><rect x="509" y="273" width="1" height="1" fill="#000"/><rect x="516" y="273" width="1" height="1" fill="#000"/><rect x="518" y="273" width="1" height="1" fill="#000"/><rect x="523" y="273" width="1" height="1" fill="#000"/><rect x="525" y="273" width="1" height="1" fill="#000"/><rect x="537" y="273" width="1" height="1" fill="#000"/><rect x="541" y="273" width="1" height="1" fill="#000"/><rect x="546" y="273" width="1" height="1" fill="#000"/><rect x="553" y="273" width="1" height="1" fill="#000"/><rect x="557" y="273" width="1" height="1" fill="#000"/><rect x="569" y="273" width="1" height="1" fill="#000"/><rect x="572" y="273" width="1" height="1" fill="#000"/><rect x="588" y="273" width="1" height="1" fill="#000"/><rect x="593" y="273" width="1" height="1" fill="#000"/><rect x="605" y="273" width="1" height="1" fill="#000"/><rect x="627" y="273" width="1" height="1" fill="#000"/><rect x="631" y="273" width="1" height="1" fill="#000"/><rect x="634" y="273" width="1" height="1" fill="#000"/><rect x="650" y="273" width="1" height="1" fill="#000"/><rect x="666" y="273" width="1" height="1" fill="#000"/><rect x="688" y="273" width="1" height="1" fill="#000"/><rect x="693" y="273" width="1" height="1" fill="#000"/><rect x="699" y="273" width="1" height="1" fill="#000"/><rect x="702" y="273" width="1" height="1" fill="#000"/><rect x="714" y="273" width="1" height="1" fill="#000"/><rect x="717" y="273" width="1" height="1" fill="#000"/><rect x="751" y="273" width="1" height="1" fill="#000"/><rect x="756" y="273" width="1" height="1" fill="#000"/><rect x="765" y="273" width="1" height="1" fill="#000"/><rect x="787" y="273" width="1" height="1" fill="#000"/><rect x="799" y="273" width="1" height="1" fill="#000"/><rect x="806" y="273" width="1" height="1" fill="#000"/><rect x="812" y="273" width="1" height="1" fill="#000"/><rect x="821" y="273" width="1" height="1" fill="#000"/><rect x="837" y="273" width="1" height="1" fill="#000"/><rect x="846" y="273" width="1" height="1" fill="#000"/><rect x="852" y="273" width="1" height="1" fill="#000"/><rect x="857" y="273" width="1" height="1" fill="#000"/><rect x="862" y="273" width="1" height="1" fill="#000"/><rect x="866" y="273" width="1" height="1" fill="#000"/><rect x="871" y="273" width="1" height="1" fill="#000"/><rect x="874" y="273" width="1" height="1" fill="#000"/><rect x="890" y="273" width="1" height="1" fill="#000"/><rect x="895" y="273" width="1" height="1" fill="#000"/><rect x="907" y="273" width="1" height="1" fill="#000"/><rect x="916" y="273" width="1" height="1" fill="#000"/><rect x="922" y="273" width="1" height="1" fill="#000"/><rect x="931" y="273" width="1" height="1" fill="#000"/><rect x="936" y="273" width="1" height="1" fill="#000"/><rect x="952" y="273" width="1" height="1" fill="#000"/><rect x="955" y="273" width="1" height="1" fill="#000"/><rect x="958" y="273" width="1" height="1" fill="#000"/><rect x="970" y="273" width="1" height="1" fill="#000"/><rect x="977" y="273" width="1" height="1" fill="#000"/><rect x="981" y="273" width="1" height="1" fill="#000"/><rect x="987" y="273" width="1" height="1" fill="#000"/><rect x="991" y="273" width="1" height="1" fill="#000"/><rect x="1000" y="273" width="1" height="1" fill="#000"/><rect x="1007" y="273" width="1" height="1" fill="#000"/><rect x="1009" y="273" width="1" height="1" fill="#000"/><rect x="1031" y="273" width="1" height="1" fill="#000"/><rect x="1034" y="273" width="1" height="1" fill="#000"/><rect x="1046" y="273" width="1" height="1" fill="#000"/><rect x="1074" y="273" width="1" height="1" fill="#000"/><rect x="1080" y="273" width="1" height="1" fill="#000"/><rect x="1096" y="273" width="1" height="1" fill="#000"/><rect x="1105" y="273" width="1" height="1" fill="#000"/><rect x="1121" y="273" width="1" height="1" fill="#000"/><rect x="392" y="271" width="19" height="3" fill="#ebeb00"/><rect x="394" y="274" width="16" height="2" fill="#000"/><rect x="410" y="271" width="2" height="74" fill="#ebeb00"/><rect x="410" y="345" width="1" height="70" fill="#ebeb00"/><rect x="722" y="271" width="19" height="3" fill="#ebeb00"/><rect x="724" y="274" width="15" height="2" fill="#000"/><rect x="739" y="271" width="2" height="63" fill="#ebeb00"/><rect x="739" y="334" width="1" height="62" fill="#ebeb00"/><rect x="1052" y="271" width="19" height="3" fill="#ebeb00"/><rect x="1054" y="274" width="16" height="2" fill="#000"/><rect x="1070" y="271" width="2" height="71" fill="#ebeb00"/><rect x="1070" y="342" width="1" height="67" fill="#ebeb00"/><rect x="393" y="270" width="1" height="1" fill="#ebeb00"/><rect x="407" y="271" width="1" height="1" fill="#000"/><rect x="425" y="276" width="1" height="1" fill="#ebeb00"/><rect x="426" y="276" width="1" height="1" fill="#ebeb00"/><rect x="723" y="270" width="1" height="1" fill="#ebeb00"/><rect x="736" y="271" width="1" height="1" fill="#000"/><rect x="754" y="276" width="1" height="1" fill="#ebeb00"/><rect x="755" y="277" width="1" height="1" fill="#ebeb00"/><rect x="1053" y="270" width="1" height="1" fill="#ebeb00"/><rect x="1066" y="271" width="1" height="1" fill="#000"/><rect x="1068" y="271" width="1" height="1" fill="#000"/></svg><svg style="left:217px;top:269px" width="20" height="13" viewBox="0 0 20 13">
<path d="M0.5 0.5 H13 L18.5 6.3 L13 12 H0.5 Z" fill="#ffff00" stroke="#2a2a50" stroke-width="0.6"/>
<path d="M5.5 3.5 L8.5 1.8 H10 V11.5 H7.8 V4.5 L5.5 5.2 Z" fill="#000"/></svg><svg style="left:1117px;top:269px" width="19" height="13" viewBox="0 0 19 13">
<path d="M18.5 0.5 H6 L0.5 6.3 L6 12 H18.5 Z" fill="#ffff00" stroke="#2a2a50" stroke-width="0.6"/>
<path d="M7 2.5 H14.5 M10.8 2.5 V11.5" stroke="#202020" stroke-width="1.3"/></svg><div class="a" style="left:237px;top:475px;width:92px;height:19px;background:#000;"></div><div class="t" style="left:239px;top:479.5px;font-size:12px;color:#ffff00;font-weight:400;">CH1</div><svg style="left:267px;top:483px" width="11" height="6" viewBox="0 0 11 6"><rect x="0" y="0" width="1.3" height="1.3" fill="#ffff00"/><rect x="3.2" y="0" width="1.3" height="1.3" fill="#ffff00"/><rect x="6.4" y="0" width="1.3" height="1.3" fill="#ffff00"/><rect x="9.5" y="0" width="1.3" height="1.3" fill="#ffff00"/><rect x="0" y="4" width="10.8" height="1.2" fill="#ffff00"/></svg><div class="t" style="left:288px;top:479.5px;font-size:12px;color:#ffff00;font-weight:400;">100V</div><div class="a" style="left:902px;top:475px;width:213px;height:19px;background:#000;"></div><div class="t" style="left:904.5px;top:479.5px;font-size:12px;color:#ff8c00;font-weight:400;letter-spacing:0.2px">Time: 2.000ms</div><div class="t" style="left:1005px;top:479.2px;font-size:12px;color:#ff8c00;font-weight:400;letter-spacing:0.1px">Sample Rate: 1MHz</div>
<div class="a" style="left:1142px;top:81px;width:224px;height:426px;background:#f0f4fa;"></div><div class="a" style="left:1146px;top:81px;width:220px;height:19px;background:linear-gradient(#9ab4d6,#c0d4ea);"></div><div class="a" style="left:1146px;top:100px;width:220px;height:1px;background:#e4ecf8;"></div><div class="t" style="left:1150px;top:85.5px;font-size:12px;color:#000;font-weight:400;">Control Panel</div><svg style="left:1336px;top:87px" width="8" height="9" viewBox="0 0 8 9">
<path d="M1 0 H6 V5.5 H4 V1 H2 V5.5 H1 Z" fill="#000"/><rect x="0" y="5" width="7" height="1.2" fill="#000"/><rect x="3" y="6" width="1.1" height="2.2" fill="#000"/></svg><svg style="left:1352px;top:87px" width="9" height="7" viewBox="0 0 9 7"><path d="M0.6 0.5 L7.8 6.5 M7.8 0.5 L0.6 6.5" stroke="#000" stroke-width="1.6"/></svg><div class="a" style="left:1146px;top:101px;width:220px;height:23px;background:#e1e1e1;border:1px solid #adadad"></div><div class="t" style="left:1150px;top:107px;font-size:12px;color:#000;font-weight:400;">Scope</div><svg style="left:1353px;top:110px" width="9" height="6" viewBox="0 0 9 6"><path d="M0.5 0.7 L4.5 4.7 L8.5 0.7" stroke="#505050" stroke-width="1" fill="none"/></svg><div class="a" style="left:1146px;top:124px;width:220px;height:24px;background:linear-gradient(#f4f6fc 0%,#eff1f9 35%,#b1b5cc 100%);"></div><div class="a" style="left:1146px;top:148px;width:220px;height:339px;background:#f0f0f0;"></div><div class="a" style="left:1152px;top:161px;width:198px;height:118px;background:transparent;border:1px solid #fff"></div><div class="a" style="left:1151px;top:160px;width:198px;height:118px;background:transparent;border:1px solid #dcdcdc"></div><div class="a" style="left:1226px;top:154px;width:54px;height:12px;background:#f0f0f0;"></div><div class="t" style="left:1229px;top:154.8px;font-size:11px;color:#000;font-weight:400;letter-spacing:0.1px">Horizontal</div><div class="t" style="left:1161px;top:174.7px;font-size:11px;color:#000;font-weight:400;letter-spacing:-0.5px">Time/DIV</div><div class="a" style="left:1160px;top:192px;width:74px;height:22px;background:#e1e1e1;border:1px solid #adadad"></div><div class="t" style="left:1164px;top:197.6px;font-size:11px;color:#000;font-weight:400;">2.000ms</div><svg style="left:1221px;top:201.2px" width="9" height="6" viewBox="0 0 9 6"><path d="M0.5 0.5 L4.5 4.5 L8.5 0.5" stroke="#555" stroke-width="1" fill="none"/></svg><div class="t" style="left:1161px;top:224.7px;font-size:11px;color:#000;font-weight:400;letter-spacing:-0.3px">Format</div><div class="a" style="left:1160px;top:244px;width:74px;height:22px;background:#e1e1e1;border:1px solid #adadad"></div><div class="t" style="left:1164px;top:249.6px;font-size:11px;color:#000;font-weight:400;">Y-T</div><svg style="left:1221px;top:253.2px" width="9" height="6" viewBox="0 0 9 6"><path d="M0.5 0.5 L4.5 4.5 L8.5 0.5" stroke="#555" stroke-width="1" fill="none"/></svg><svg style="left:1249.5px;top:180.5px" width="90" height="90" viewBox="-45 -45 90 90"><path d="M-26.09 26.09 A36.9 36.9 0 1 1 26.09 26.09 L24.32 24.32 A34.4 34.4 0 1 0 -24.32 24.32 Z" fill="#fff" stroke="#000" stroke-width="1"/>
<circle r="30.5" fill="none" stroke="#cfcfcf" stroke-width="6"/>
<path d="M21.57 -21.57 A30.5 30.5 0 0 1 -21.57 21.57" fill="none" stroke="#b8b8b8" stroke-width="6"/>
<circle r="33.8" fill="none" stroke="#000" stroke-width="1"/>
<path d="M19.45 -19.45 L23.69 -23.69 M-19.45 19.45 L-23.69 23.69" stroke="#000" stroke-width="0.9"/>
<path d="M-21.92 21.92 L-30.76 30.76 M21.92 21.92 L30.76 30.76" stroke="#000" stroke-width="1.3"/>
<circle r="27.5" fill="#0000cc" stroke="#000" stroke-width="1"/>
<path d="M1.4 -23.5 V-12 M0.3 -12.5 V-5.5" stroke="#ffffc8" stroke-width="2" fill="none"/></svg><div class="a" style="left:1152px;top:298px;width:198px;height:200px;background:transparent;border:1px solid #fff;border-bottom:none"></div><div class="a" style="left:1151px;top:297px;width:198px;height:200px;background:transparent;border:1px solid #dcdcdc;border-bottom:none"></div><div class="a" style="left:1233px;top:291px;width:41px;height:12px;background:#f0f0f0;"></div><div class="t" style="left:1235.5px;top:292px;font-size:11px;color:#000;font-weight:400;">Vertical</div><div class="a" style="left:1160px;top:314px;width:13px;height:13px;background:#fff;border:1px solid #333"></div><svg style="left:1160px;top:314px" width="13" height="13" viewBox="0 0 13 13"><path d="M2.2 6.3 L5 9.2 L11 3.2" stroke="#333" stroke-width="1.3" fill="none"/></svg><div class="t" style="left:1176px;top:315.8px;font-size:11px;color:#000;font-weight:400;letter-spacing:-0.5px">CH1</div><div class="a" style="left:1160px;top:335px;width:74px;height:22px;background:#e1e1e1;border:1px solid #adadad"></div><div class="t" style="left:1164px;top:340.6px;font-size:11px;color:#000;font-weight:400;">100V</div><svg style="left:1221px;top:344.2px" width="9" height="6" viewBox="0 0 9 6"><path d="M0.5 0.5 L4.5 4.5 L8.5 0.5" stroke="#555" stroke-width="1" fill="none"/></svg><div class="a" style="left:1160px;top:370px;width:74px;height:22px;background:#cccccc;border:1px solid #c4c4c4"></div><div class="t" style="left:1164px;top:375.6px;font-size:11px;color:#a0a0a0;font-weight:400;">DC</div><svg style="left:1221px;top:379.2px" width="9" height="6" viewBox="0 0 9 6"><path d="M0.5 0.5 L4.5 4.5 L8.5 0.5" stroke="#bdbdbd" stroke-width="1" fill="none"/></svg><div class="a" style="left:1160px;top:405px;width:74px;height:22px;background:#e1e1e1;border:1px solid #adadad"></div><div class="t" style="left:1164px;top:410.6px;font-size:11px;color:#000;font-weight:400;">x100</div><svg style="left:1221px;top:414.2px" width="9" height="6" viewBox="0 0 9 6"><path d="M0.5 0.5 L4.5 4.5 L8.5 0.5" stroke="#555" stroke-width="1" fill="none"/></svg><svg style="left:1249.5px;top:315.3px" width="90" height="90" viewBox="-45 -45 90 90"><path d="M-26.09 26.09 A36.9 36.9 0 1 1 26.09 26.09 L24.32 24.32 A34.4 34.4 0 1 0 -24.32 24.32 Z" fill="#fff" stroke="#000" stroke-width="1"/>
<circle r="30.5" fill="none" stroke="#cfcfcf" stroke-width="6"/>
<path d="M21.57 -21.57 A30.5 30.5 0 0 1 -21.57 21.57" fill="none" stroke="#b8b8b8" stroke-width="6"/>
<circle r="33.8" fill="none" stroke="#000" stroke-width="1"/>
<path d="M19.45 -19.45 L23.69 -23.69 M-19.45 19.45 L-23.69 23.69" stroke="#000" stroke-width="0.9"/>
<path d="M-21.92 21.92 L-30.76 30.76 M21.92 21.92 L30.76 30.76" stroke="#000" stroke-width="1.3"/>
<circle r="27.5" fill="#ffff00" stroke="#000" stroke-width="1"/>
<path d="M-18.5 -13.2 L-5 -4.5" stroke="#e6e6c8" stroke-width="2.2"/></svg><div class="a" style="left:1271px;top:412px;width:13px;height:13px;background:#fff;border:1px solid #333"></div><div class="t" style="left:1287.5px;top:413.7px;font-size:11px;color:#000;font-weight:400;">Invert</div><div class="a" style="left:1160px;top:454px;width:13px;height:13px;background:#fff;border:1px solid #333"></div><div class="t" style="left:1176px;top:455.7px;font-size:11px;color:#000;font-weight:400;letter-spacing:-0.5px">CH2</div><div class="a" style="left:1146px;top:466px;width:204px;height:20px;overflow:hidden"><div class="a" style="left:14px;top:9px;width:74px;height:22px;background:#ccc;border:1px solid #c4c4c4"></div><div class="t" style="left:18px;top:14.6px;font-size:11px;color:#a0a0a0">1.00V</div><svg style="left:103.5px;top:-8px" width="90" height="90" viewBox="-45 -45 90 90"><path d="M-26.09 26.09 A36.9 36.9 0 1 1 26.09 26.09 L24.32 24.32 A34.4 34.4 0 1 0 -24.32 24.32 Z" fill="#fff" stroke="#000" stroke-width="1"/>
<circle r="30.5" fill="none" stroke="#cfcfcf" stroke-width="6"/>
<path d="M21.57 -21.57 A30.5 30.5 0 0 1 -21.57 21.57" fill="none" stroke="#b8b8b8" stroke-width="6"/>
<circle r="33.8" fill="none" stroke="#000" stroke-width="1"/>
<path d="M19.45 -19.45 L23.69 -23.69 M-19.45 19.45 L-23.69 23.69" stroke="#000" stroke-width="0.9"/>
<path d="M-21.92 21.92 L-30.76 30.76 M21.92 21.92 L30.76 30.76" stroke="#000" stroke-width="1.3"/>
<circle r="27.5" fill="#9c9c9c" stroke="#000" stroke-width="1"/>
</svg></div><div class="a" style="left:1350px;top:148px;width:16px;height:339px;background:#f0f0f0;"></div><svg style="left:1353px;top:153px" width="10" height="8" viewBox="0 0 10 8"><path d="M1.2 6.6 L5 2.6 L8.8 6.6" stroke="#404040" stroke-width="2" fill="none"/></svg><div class="a" style="left:1350px;top:165px;width:15px;height:133px;background:#cdcdcd;"></div><svg style="left:1353px;top:474px" width="10" height="8" viewBox="0 0 10 8"><path d="M1.2 1.4 L5 5.4 L8.8 1.4" stroke="#404040" stroke-width="2" fill="none"/></svg><div class="a" style="left:1146px;top:486px;width:204px;height:1px;background:#fafafa;"></div><div class="a" style="left:1146px;top:487px;width:204px;height:16px;background:#f0f0f0;"></div><svg style="left:1150px;top:490px" width="8" height="10" viewBox="0 0 8 10"><path d="M6.6 1.2 L2.6 5 L6.6 8.8" stroke="#404040" stroke-width="2" fill="none"/></svg><div class="a" style="left:1163px;top:487px;width:160px;height:15px;background:#cdcdcd;"></div><svg style="left:1336px;top:490px" width="8" height="10" viewBox="0 0 8 10"><path d="M1.4 1.2 L5.4 5 L1.4 8.8" stroke="#404040" stroke-width="2" fill="none"/></svg><div class="a" style="left:1350px;top:487px;width:16px;height:16px;background:#f0f0f0;"></div>
<div class="a" style="left:210px;top:503px;width:1156px;height:4px;background:#eef0f8;"></div><div class="a" style="left:210px;top:507px;width:1156px;height:19px;background:linear-gradient(#bccbdb,#d9e4f0);"></div><div class="t" style="left:214px;top:511px;font-size:12px;color:#000;font-weight:400;">Output</div><svg style="left:1336px;top:513px" width="8" height="9" viewBox="0 0 8 9">
<path d="M1 0 H6 V5.5 H4 V1 H2 V5.5 H1 Z" fill="#000"/><rect x="0" y="5" width="7" height="1.2" fill="#000"/><rect x="3" y="6" width="1.1" height="2.2" fill="#000"/></svg><svg style="left:1352px;top:513px" width="9" height="7" viewBox="0 0 9 7"><path d="M0.6 0.5 L7.8 6.5 M7.8 0.5 L0.6 6.5" stroke="#000" stroke-width="1.6"/></svg><div class="a" style="left:209px;top:526px;width:1157px;height:181px;background:#fff;border-left:1px solid #a0a0a0"></div><div class="a" style="left:210px;top:707px;width:1156px;height:1px;background:#d9d9d9;"></div><div class="a" style="left:210px;top:526px;width:1156px;height:20px;background:#f0f0f0;"></div><div class="a" style="left:215px;top:532px;width:9px;height:9px;background:linear-gradient(#fafafa,#e4e4e4);border:1px solid #9a9a9a"></div><div class="a" style="left:217px;top:536px;width:5px;height:1px;background:#606060;"></div><div class="t" style="left:233px;top:529.6px;font-size:12px;color:#6d6d6d;font-weight:700;">CH1</div><div class="a" style="left:210px;top:546px;width:19px;height:57px;background:#f0f0f0;"></div><div class="a" style="left:229px;top:564px;width:1137px;height:1px;background:#f0f0f0;"></div><div class="t" style="left:233px;top:548.5px;font-size:12px;color:#000;font-weight:400;">Maximum</div><div class="t" style="left:359px;top:548.5px;font-size:12px;color:#000;font-weight:400;letter-spacing:-0.4px">12.5V</div><div class="a" style="left:229px;top:583px;width:1137px;height:1px;background:#f0f0f0;"></div><div class="t" style="left:233px;top:567.5px;font-size:12px;color:#000;font-weight:400;">Minimum</div><div class="t" style="left:359px;top:567.5px;font-size:12px;color:#000;font-weight:400;letter-spacing:-0.4px">-355V</div><div class="a" style="left:229px;top:602px;width:1137px;height:1px;background:#f0f0f0;"></div><div class="t" style="left:233px;top:586.5px;font-size:12px;color:#000;font-weight:400;">Peak to Peak</div><div class="t" style="left:359px;top:586.5px;font-size:12px;color:#000;font-weight:400;letter-spacing:-0.4px">367V</div><div class="a" style="left:354px;top:546px;width:1px;height:160px;background:#f0f0f0;"></div>
<div class="a" style="left:0px;top:708px;width:1366px;height:20px;background:#f0f0f0;"></div><div class="t" style="left:4px;top:712.8px;font-size:12px;color:#000;font-weight:400;letter-spacing:-0.1px">Running...</div><div class="t" style="left:1262px;top:712.5px;font-size:12px;color:#000;font-weight:400;letter-spacing:-0.4px">04-04-2021  08:43</div>
<div class="a" style="left:0px;top:728px;width:1366px;height:40px;background:#d3d3d3;"></div><div class="a" style="left:0px;top:728px;width:1366px;height:1px;background:#c8c8c8;"></div><svg style="left:16px;top:740px" width="16" height="16" viewBox="0 0 16 16">
<path d="M0 2.2 L6.6 1.3 V7.6 H0 Z M7.4 1.2 L16 0 V7.6 H7.4 Z M0 8.4 H6.6 V14.7 L0 13.8 Z M7.4 8.4 H16 V16 L7.4 14.8 Z" fill="#000"/></svg><div class="a" style="left:49px;top:729px;width:342px;height:38px;background:#fff;"></div><svg style="left:59px;top:740px" width="19" height="19" viewBox="0 0 19 19">
<circle cx="11.6" cy="6.2" r="5.3" fill="none" stroke="#000" stroke-width="1.2"/><path d="M7.8 10 L1 16.8" stroke="#000" stroke-width="1.3"/></svg><div class="t" style="left:89px;top:741px;font-size:14.3px;color:#000;font-weight:400;">Type here to search</div><svg style="left:408px;top:739px" width="17" height="17" viewBox="0 0 17 17"><circle cx="7.8" cy="8.5" r="6.1" fill="none" stroke="#000" stroke-width="1.9"/></svg><svg style="left:455px;top:739px" width="18" height="17" viewBox="0 0 18 17">
<path d="M1.1 0.8 V3.4 H11.8 V0.8" stroke="#000" stroke-width="1.2" fill="none"/>
<rect x="1.1" y="5.5" width="10.7" height="5.8" stroke="#000" stroke-width="1.2" fill="none"/>
<path d="M1.1 16.2 V13.5 H11.8 V16.2" stroke="#000" stroke-width="1.2" fill="none"/>
<path d="M15.6 0.8 V4 M15.6 9.3 V16.2" stroke="#000" stroke-width="1.2"/>
<rect x="14" y="5" width="3" height="3" fill="#000"/></svg><svg style="left:503px;top:738px" width="23" height="20" viewBox="0 0 23 20">
<defs><linearGradient id="gexp" x1="0" y1="0" x2="0" y2="1"><stop offset="0" stop-color="#fdd86a"/><stop offset="1" stop-color="#f8c64a"/></linearGradient>
<linearGradient id="gexb" x1="0" y1="0" x2="0" y2="1"><stop offset="0" stop-color="#4aa0ec"/><stop offset="1" stop-color="#2a7ed6"/></linearGradient></defs>
<rect x="1" y="0.9" width="10" height="3.2" rx="1" fill="#e0a012"/>
<rect x="1" y="2.2" width="21" height="15.8" fill="url(#gexp)"/>
<path d="M4.9 18.9 V11 H18.8 V18.9 H15 V14.1 H9.1 V18.9 Z" fill="url(#gexb)"/></svg><svg style="left:551px;top:735px" width="26" height="26" viewBox="0 0 26 26">
<defs><linearGradient id="ge1" x1="0" y1="0" x2="0.4" y2="1"><stop offset="0" stop-color="#2a9ee6"/><stop offset="1" stop-color="#0f62c0"/></linearGradient>
<linearGradient id="ge2" x1="0" y1="0.3" x2="1" y2="0.7"><stop offset="0" stop-color="#2ab0ea"/><stop offset="0.5" stop-color="#30c4c8"/><stop offset="1" stop-color="#62da4e"/></linearGradient></defs>
<circle cx="12.7" cy="12.7" r="11.9" fill="url(#ge1)"/>
<path d="M0.9 12.5 C1.2 5.8 6.2 0.8 12.7 0.8 C19.6 0.8 24.6 6 24.6 12 C24.6 15.6 22 17.8 18.5 17.8 C15.8 17.8 14.2 16.4 14.2 14.8 C14.2 13.8 15.2 13.2 15.2 11.6 C15.2 9 12.6 7.4 10 7.4 C5.6 7.4 1.8 9.6 0.9 12.5 Z" fill="url(#ge2)"/>
<path d="M9.2 13.8 C9.2 11.2 11.2 9.6 13.2 9.6 C14.8 9.6 15.6 10.6 15.2 11.8 C14.8 12.8 14.2 13.6 14.3 14.8 C12.2 15.8 9.2 15.8 9.2 13.8 Z" fill="#e4f0f4"/>
<path d="M7.6 14.6 C8 21 14 24.8 19.6 22.8 C21.6 22 23.2 20.6 23.7 19.6 C22.2 20.4 20.2 20.9 18.2 20.9 C13.2 20.9 9.4 18.2 9.2 14 Z" fill="#0d4a9c"/>
</svg><svg style="left:601px;top:736px" width="25" height="24" viewBox="0 0 25 24">
<path d="M0 8 L12.5 0.5 L25 8 V23.5 H0 Z" fill="#0f64c0"/>
<path d="M2.5 8 H22.5 L12.5 15 Z" fill="#f2f2f2"/>
<path d="M0 8 L12.5 16.5 L25 8 V23.5 H0 Z" fill="#2aa6ec"/>
<path d="M0 23.5 L12.5 14.5 L25 23.5 Z" fill="#1a8ee0" opacity="0.7"/>
<path d="M25 8 L12.5 16.5 L25 23.5 Z" fill="#3ac0f4" opacity="0.8"/></svg><div class="a" style="left:638px;top:728px;width:45px;height:40px;background:#eeeeee;"></div><div class="a" style="left:683px;top:728px;width:3px;height:40px;background:#e2e2e2;"></div><div class="a" style="left:638px;top:766px;width:45px;height:2px;background:#1f9ed2;"></div><div class="a" style="left:682px;top:728px;width:1px;height:40px;background:#c6c6c6;"></div><svg style="left:651px;top:736px" width="22" height="25" viewBox="0 0 22 25">
<defs><linearGradient id="gscr" x1="0" y1="0" x2="0" y2="1"><stop offset="0" stop-color="#6a6a6a"/><stop offset="0.3" stop-color="#2a2a2a"/><stop offset="0.7" stop-color="#3a3a3a"/><stop offset="1" stop-color="#5a5a5a"/></linearGradient></defs>
<rect x="0.5" y="0.5" width="21" height="19.5" rx="1.5" fill="#dadada" stroke="#9a9a9a" stroke-width="1"/>
<rect x="2" y="2" width="18" height="15" fill="url(#gscr)"/>
<path d="M3 9.5 H19 M3 5.5 H19 M3 13 H19" stroke="#777" stroke-width="0.5" opacity="0.6"/><path d="M3 9.5 H8.5 L9.8 8 L10.5 4.5 L11.2 13 L11.8 2.8 L12.5 9.5 H19" stroke="#6ab828" fill="none" stroke-width="1"/>
<rect x="17" y="18" width="3" height="1.2" fill="#e84040"/>
<rect x="8.5" y="20.5" width="5" height="1.5" fill="#a8a8a8"/><rect x="5" y="22.5" width="12" height="1.6" rx="0.8" fill="#9a9a9a"/></svg><svg style="left:1069px;top:743px" width="13" height="8" viewBox="0 0 13 8"><path d="M0.7 7.3 L6.5 1.3 L12.3 7.3" stroke="#000" stroke-width="1.2" fill="none"/></svg><svg style="left:1093px;top:741px" width="13" height="16" viewBox="0 0 13 16">
<path d="M2.5 2 Q6 0 9.5 2 M2.5 14 Q6 16 9.5 14" stroke="#000" stroke-width="1" fill="none"/>
<rect x="1" y="4.5" width="7.5" height="7" rx="1" fill="none" stroke="#000" stroke-width="1.1"/>
<path d="M8.5 7 L12 5 V11 L8.5 9" stroke="#000" stroke-width="1.1" fill="none"/></svg><svg style="left:1115px;top:743px" width="17" height="10" viewBox="0 0 17 10">
<path d="M3.5 9.5 H13.5 Q16.5 9.5 16.5 6.8 Q16.5 4 13.5 4 Q12.5 0.5 8.5 0.5 Q5 0.5 4.2 3.8 Q0.5 4 0.5 6.8 Q0.5 9.5 3.5 9.5 Z" fill="#a8a8a8" stroke="#000" stroke-width="1"/></svg><svg style="left:1139px;top:742px" width="17" height="12" viewBox="0 0 17 12">
<path d="M1.5 0 V3 M4.5 0 V3 M0.5 3 H5.5 V5.5 Q5.5 7 3 7 Q0.5 7 0.5 5.5 Z M3 7 V10" stroke="#000" stroke-width="1.1" fill="none"/>
<rect x="5.5" y="3.5" width="10" height="7" fill="none" stroke="#000" stroke-width="1"/><rect x="7" y="5" width="7" height="4" fill="#000"/><rect x="15.5" y="5.5" width="1.5" height="3" fill="#000"/></svg><svg style="left:1165px;top:742px" width="14" height="14" viewBox="0 0 14 14">
<path d="M1 13 Q1 1 13 1 M3.5 13 Q3.5 3.5 13 3.5 M6 13 Q6 6 13 6 M8.5 13 Q8.5 8.5 13 8.5" stroke="#000" stroke-width="0.9" fill="none"/><circle cx="12" cy="12" r="1.6" fill="#000"/></svg><svg style="left:1186px;top:741px" width="18" height="15" viewBox="0 0 18 15">
<path d="M0.5 5 H3.5 L8 1 V14 L3.5 10 H0.5 Z" fill="none" stroke="#000" stroke-width="1"/>
<path d="M10.5 5 Q12 7.5 10.5 10 M12.8 3 Q15.5 7.5 12.8 12 M15 1 Q19 7.5 15 14" stroke="#000" stroke-width="1" fill="none"/></svg><div class="t" style="left:1213px;top:743px;font-size:11.3px;color:#000;font-weight:400;">ENG</div><div class="t" style="left:1256px;top:733.4px;font-size:12px;color:#000;font-weight:400;letter-spacing:-0.2px">8:43 AM</div><div class="t" style="left:1251.5px;top:750.6px;font-size:12px;color:#000;font-weight:400;letter-spacing:-0.2px">4/04/2021</div><svg style="left:1324px;top:739px" width="18" height="17" viewBox="0 0 18 17">
<path d="M0.5 0.5 H17.5 V12 H10 L7.5 15.5 L6 12 H0.5 Z" fill="none" stroke="#000" stroke-width="1.1"/></svg><div class="a" style="left:1360px;top:728px;width:1px;height:40px;background:#b8b8b8;"></div>
</body></html>
